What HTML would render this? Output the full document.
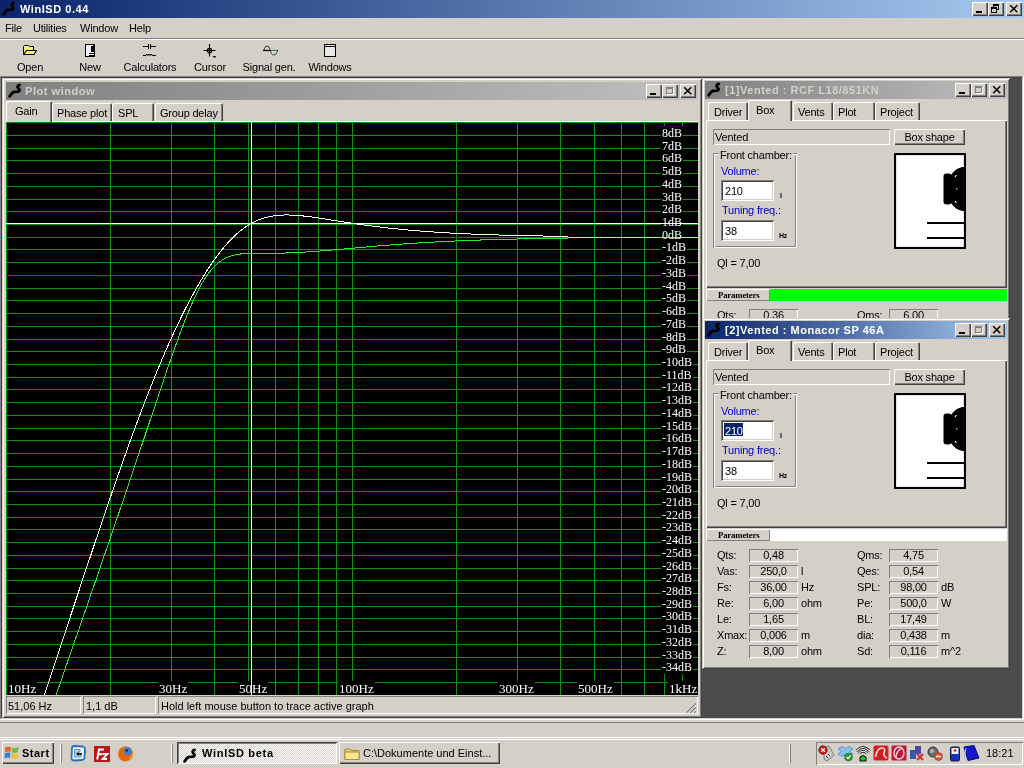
<!DOCTYPE html><html><head><meta charset="utf-8"><style>
html,body{margin:0;padding:0;}body{will-change:transform;width:1024px;height:768px;overflow:hidden;position:relative;background:#d4d0c8;font-family:"Liberation Sans",sans-serif;font-size:11px;}
body div,body svg{position:absolute;} .t{white-space:nowrap;letter-spacing:-0.2px} .lab{letter-spacing:0;font-family:"Liberation Serif",serif;font-size:12px;line-height:12px;padding:1px 1px;background:#000;color:#fff;}
</style></head><body>
<div style="left:0px;top:0px;width:1024px;height:18px;background:linear-gradient(to right,#0a246a,#a6caf0)"></div>
<svg style="left:-2px;top:-2px" width="20" height="20"><path d="M15.6 5.0 C13.2 5.2 13.0 7.6 14.8 8.8 C16.2 9.8 15.6 11.4 13.8 11.6 L10.2 11.9 C8.4 12.3 7.0 14 5.6 16.4" fill="none" stroke="#000" stroke-width="2.8" stroke-linecap="round" stroke-linejoin="round"/></svg>
<div class="t" style="left:20px;top:3.69px;font-size:11px;line-height:11px;font-weight:bold;color:#fff;font-family:'Liberation Sans', sans-serif;letter-spacing:0.55px">WinISD 0.44</div>
<div style="left:972px;top:2px;width:16px;height:14px;background:#d4d0c8;box-shadow:inset 1px 1px #fff, inset -1px -1px #404040, inset -2px -2px #808080"></div>
<div style="left:976px;top:11px;width:6px;height:2px;background:#000"></div>
<div style="left:988px;top:2px;width:16px;height:14px;background:#d4d0c8;box-shadow:inset 1px 1px #fff, inset -1px -1px #404040, inset -2px -2px #808080"></div>
<div style="left:993px;top:4px;width:6px;height:6px;box-sizing:border-box;border:1px solid #000;border-top-width:2px"></div>
<div style="left:991px;top:7px;width:6px;height:6px;box-sizing:border-box;border:1px solid #000;border-top-width:2px;background:#d4d0c8"></div>
<div style="left:1006px;top:2px;width:16px;height:14px;background:#d4d0c8;box-shadow:inset 1px 1px #fff, inset -1px -1px #404040, inset -2px -2px #808080"></div>
<svg style="left:1006px;top:2px" width="16" height="14"><path d="M4.2 3.2 L11.3 10.3 M11.3 3.2 L4.2 10.3" stroke="#000" stroke-width="1.5"/></svg>
<div class="t" style="left:5px;top:22.69px;font-size:11px;line-height:11px;font-weight:normal;color:#000;font-family:'Liberation Sans', sans-serif;">File</div>
<div class="t" style="left:33px;top:22.69px;font-size:11px;line-height:11px;font-weight:normal;color:#000;font-family:'Liberation Sans', sans-serif;">Utilities</div>
<div class="t" style="left:80px;top:22.69px;font-size:11px;line-height:11px;font-weight:normal;color:#000;font-family:'Liberation Sans', sans-serif;">Window</div>
<div class="t" style="left:129px;top:22.69px;font-size:11px;line-height:11px;font-weight:normal;color:#000;font-family:'Liberation Sans', sans-serif;">Help</div>
<div style="left:0px;top:38px;width:1024px;height:1px;background:#808080"></div>
<div style="left:0px;top:39px;width:1024px;height:1px;background:#fff"></div>
<div class="t" style="left:-10px;width:80px;text-align:center;top:61.69px;font-size:11px;line-height:11px;letter-spacing:-0.2px">Open</div>
<div class="t" style="left:50px;width:80px;text-align:center;top:61.69px;font-size:11px;line-height:11px;letter-spacing:-0.2px">New</div>
<div class="t" style="left:110px;width:80px;text-align:center;top:61.69px;font-size:11px;line-height:11px;letter-spacing:-0.2px">Calculators</div>
<div class="t" style="left:170px;width:80px;text-align:center;top:61.69px;font-size:11px;line-height:11px;letter-spacing:-0.2px">Cursor</div>
<div class="t" style="left:229px;width:80px;text-align:center;top:61.69px;font-size:11px;line-height:11px;letter-spacing:-0.2px">Signal gen.</div>
<div class="t" style="left:290px;width:80px;text-align:center;top:61.69px;font-size:11px;line-height:11px;letter-spacing:-0.2px">Windows</div>
<svg style="left:22px;top:44px" width="16" height="12"><path d="M1.5 9.5 V2.5 L2.5 1.5 H6.5 L7.5 2.5 H11.5 V6.5" fill="#f0f080" stroke="#000" stroke-width="1"/><path d="M1.5 10.5 L4.5 6.5 H14.5 L12 10.5 Z" fill="#f4f478" stroke="#000" stroke-width="1.1" stroke-linejoin="round"/></svg>
<svg style="left:85px;top:44px" width="10" height="13" shape-rendering="crispEdges"><rect x="0" y="0" width="10" height="13" fill="#000"/><rect x="1" y="1" width="7" height="1" fill="#fff"/><rect x="1" y="1" width="5" height="8" fill="#f0f0f8"/><rect x="1" y="9" width="3" height="3" fill="#f0f0f8"/><rect x="4" y="8" width="5" height="1" fill="#fff"/><rect x="4" y="10" width="5" height="1" fill="#fff"/></svg>
<svg style="left:142px;top:43px" width="16" height="15" shape-rendering="crispEdges"><rect x="1" y="3" width="13" height="1" fill="#000"/><rect x="6" y="1" width="1" height="5" fill="#000"/><rect x="8" y="1" width="1" height="5" fill="#000"/><rect x="7" y="3" width="1" height="1" fill="#d4d0c8"/><rect x="1" y="12" width="3" height="1" fill="#000"/><rect x="11" y="12" width="3" height="1" fill="#000"/><path d="M4 12.5 L5 11 L6 12.5 L7 11 L8 12.5 L9 11 L10 12.5 L11 12" fill="none" stroke="#000" stroke-width="1" shape-rendering="auto"/></svg>
<svg style="left:202px;top:43px" width="16" height="16"><path d="M1.5 7.5 H13.5 M7.5 1 V13.5" stroke="#000" stroke-width="1.1"/><circle cx="7.5" cy="7.5" r="2.2" fill="none" stroke="#000" stroke-width="1.3"/><path d="M10.5 13 h4 l-2 2 z" fill="#000"/></svg>
<svg style="left:262px;top:43px" width="18" height="14"><path d="M1 7.5 H16" stroke="#000" stroke-width="1.2"/><path d="M2 7.5 C2.5 1.5, 7.5 1.5, 8 7.5" fill="none" stroke="#203020" stroke-width="1"/><path d="M8.5 7.5 C9 13.5, 14.5 13.5, 15.5 7.5" fill="#c8dcc8" stroke="#204a30" stroke-width="1"/></svg>
<svg style="left:324px;top:44px" width="12" height="13" shape-rendering="crispEdges"><rect x="0" y="0" width="12" height="13" fill="#000"/><rect x="1" y="1" width="10" height="1" fill="#e8e8e8"/><rect x="1" y="3" width="10" height="9" fill="#e8e8e8"/></svg>
<div style="left:2px;top:78px;width:1020px;height:640px;background:#4c4c4c"></div>
<div style="left:0px;top:76px;width:1024px;height:1px;background:#808080"></div>
<div style="left:1px;top:77px;width:1022px;height:1px;background:#404040"></div>
<div style="left:0px;top:76px;width:1px;height:644px;background:#808080"></div>
<div style="left:1px;top:77px;width:1px;height:642px;background:#404040"></div>
<div style="left:0px;top:719px;width:1024px;height:1px;background:#fff"></div>
<div style="left:1px;top:718px;width:1022px;height:1px;background:#d4d0c8"></div>
<div style="left:1023px;top:76px;width:1px;height:644px;background:#fff"></div>
<div style="left:1022px;top:77px;width:1px;height:642px;background:#d4d0c8"></div>
<div style="left:0px;top:722px;width:1024px;height:1px;background:#808080"></div>
<div style="left:0px;top:737px;width:1024px;height:1px;background:#fff"></div>
<div style="left:2px;top:78px;width:700px;height:640px;background:#d4d0c8;box-shadow:inset 1px 1px #d4d0c8, inset -1px -1px #404040, inset 2px 2px #fff, inset -2px -2px #808080"></div>
<div style="left:6px;top:82px;width:692px;height:18px;background:linear-gradient(to right,#808080,#c0c0c0)"></div>
<svg style="left:4px;top:80px" width="20" height="20"><path d="M15.6 5.0 C13.2 5.2 13.0 7.6 14.8 8.8 C16.2 9.8 15.6 11.4 13.8 11.6 L10.2 11.9 C8.4 12.3 7.0 14 5.6 16.4" fill="none" stroke="#000" stroke-width="2.8" stroke-linecap="round" stroke-linejoin="round"/></svg>
<div class="t" style="left:25px;top:85.69px;font-size:11px;line-height:11px;font-weight:bold;color:#d4d0c8;font-family:'Liberation Sans', sans-serif;letter-spacing:0.55px">Plot window</div>
<div style="left:646px;top:84px;width:16px;height:14px;background:#d4d0c8;box-shadow:inset 1px 1px #fff, inset -1px -1px #404040, inset -2px -2px #808080"></div>
<div style="left:650px;top:93px;width:6px;height:2px;background:#000"></div>
<div style="left:662px;top:84px;width:16px;height:14px;background:#d4d0c8;box-shadow:inset 1px 1px #fff, inset -1px -1px #404040, inset -2px -2px #808080"></div>
<div style="left:666px;top:87px;width:7px;height:7px;box-sizing:border-box;border:1px solid #808080;border-top-width:2px;box-shadow:1px 1px #fff"></div>
<div style="left:680px;top:84px;width:16px;height:14px;background:#d4d0c8;box-shadow:inset 1px 1px #fff, inset -1px -1px #404040, inset -2px -2px #808080"></div>
<svg style="left:680px;top:84px" width="16" height="14"><path d="M4.2 3.2 L11.3 10.3 M11.3 3.2 L4.2 10.3" stroke="#000" stroke-width="1.5"/></svg>
<div style="left:6px;top:121px;width:692px;height:1px;background:#fff"></div>
<div style="left:52px;top:103px;width:60px;height:18px;background:#d4d0c8;border-top-left-radius:2px;border-top-right-radius:2px;box-shadow:inset 1px 1px #fff, inset -1px 0 #404040, inset -2px 0 #808080"></div>
<div style="left:112px;top:103px;width:42px;height:18px;background:#d4d0c8;border-top-left-radius:2px;border-top-right-radius:2px;box-shadow:inset 1px 1px #fff, inset -1px 0 #404040, inset -2px 0 #808080"></div>
<div style="left:155px;top:103px;width:68px;height:18px;background:#d4d0c8;border-top-left-radius:2px;border-top-right-radius:2px;box-shadow:inset 1px 1px #fff, inset -1px 0 #404040, inset -2px 0 #808080"></div>
<div style="left:6px;top:101px;width:46px;height:21px;background:#d4d0c8;border-top-left-radius:2px;border-top-right-radius:2px;box-shadow:inset 1px 1px #fff, inset -1px 0 #404040, inset -2px 0 #808080"></div>
<div class="t" style="left:15px;top:105.69px;font-size:11px;line-height:11px;font-weight:normal;color:#000;font-family:'Liberation Sans', sans-serif;">Gain</div>
<div class="t" style="left:57px;top:107.69px;font-size:11px;line-height:11px;font-weight:normal;color:#000;font-family:'Liberation Sans', sans-serif;">Phase plot</div>
<div class="t" style="left:118px;top:107.69px;font-size:11px;line-height:11px;font-weight:normal;color:#000;font-family:'Liberation Sans', sans-serif;">SPL</div>
<div class="t" style="left:160px;top:107.69px;font-size:11px;line-height:11px;font-weight:normal;color:#000;font-family:'Liberation Sans', sans-serif;">Group delay</div>
<svg style="left:6px;top:122px" width="692" height="573" shape-rendering="crispEdges"><rect x="0" y="0" width="692" height="573" fill="#000"/><rect x="0" y="0" width="1" height="573" fill="#0c920c"/><rect x="104" y="0" width="1" height="573" fill="#0c920c"/><rect x="165" y="0" width="1" height="573" fill="#0c920c"/><rect x="208" y="0" width="1" height="573" fill="#0c920c"/><rect x="242" y="0" width="1" height="573" fill="#0c920c"/><rect x="269" y="0" width="1" height="573" fill="#0c920c"/><rect x="292" y="0" width="1" height="573" fill="#0c920c"/><rect x="312" y="0" width="1" height="573" fill="#0c920c"/><rect x="330" y="0" width="1" height="573" fill="#0c920c"/><rect x="346" y="0" width="1" height="573" fill="#0c920c"/><rect x="450" y="0" width="1" height="573" fill="#0c920c"/><rect x="511" y="0" width="1" height="573" fill="#0c920c"/><rect x="554" y="0" width="1" height="573" fill="#0c920c"/><rect x="588" y="0" width="1" height="573" fill="#0c920c"/><rect x="615" y="0" width="1" height="573" fill="#0c920c"/><rect x="638" y="0" width="1" height="573" fill="#0c920c"/><rect x="658" y="0" width="1" height="573" fill="#0c920c"/><rect x="676" y="0" width="1" height="573" fill="#0c920c"/><rect x="0" y="0" width="692" height="1" fill="#0c920c"/><rect x="0" y="13" width="692" height="1" fill="#0c920c"/><rect x="0" y="26" width="692" height="1" fill="#0c920c"/><rect x="0" y="38" width="692" height="1" fill="#0c920c"/><rect x="0" y="51" width="692" height="1" fill="#0c920c"/><rect x="0" y="64" width="692" height="1" fill="#0c920c"/><rect x="0" y="77" width="692" height="1" fill="#0c920c"/><rect x="0" y="89" width="692" height="1" fill="#0c920c"/><rect x="0" y="102" width="692" height="1" fill="#0c920c"/><rect x="0" y="127" width="692" height="1" fill="#0c920c"/><rect x="0" y="140" width="692" height="1" fill="#0c920c"/><rect x="0" y="153" width="692" height="1" fill="#902090"/><rect x="0" y="166" width="692" height="1" fill="#0c920c"/><rect x="0" y="178" width="692" height="1" fill="#0c920c"/><rect x="0" y="191" width="692" height="1" fill="#0c920c"/><rect x="0" y="204" width="692" height="1" fill="#0c920c"/><rect x="0" y="217" width="692" height="1" fill="#0c920c"/><rect x="0" y="229" width="692" height="1" fill="#0c920c"/><rect x="0" y="242" width="692" height="1" fill="#0c920c"/><rect x="0" y="255" width="692" height="1" fill="#0c920c"/><rect x="0" y="267" width="692" height="1" fill="#0c920c"/><rect x="0" y="280" width="692" height="1" fill="#0c920c"/><rect x="0" y="293" width="692" height="1" fill="#0c920c"/><rect x="0" y="306" width="692" height="1" fill="#0c920c"/><rect x="0" y="318" width="692" height="1" fill="#0c920c"/><rect x="0" y="331" width="692" height="1" fill="#0c920c"/><rect x="0" y="344" width="692" height="1" fill="#0c920c"/><rect x="0" y="357" width="692" height="1" fill="#0c920c"/><rect x="0" y="369" width="692" height="1" fill="#0c920c"/><rect x="0" y="382" width="692" height="1" fill="#0c920c"/><rect x="0" y="395" width="692" height="1" fill="#0c920c"/><rect x="0" y="407" width="692" height="1" fill="#0c920c"/><rect x="0" y="420" width="692" height="1" fill="#0c920c"/><rect x="0" y="433" width="692" height="1" fill="#0c920c"/><rect x="0" y="446" width="692" height="1" fill="#0c920c"/><rect x="0" y="458" width="692" height="1" fill="#0c920c"/><rect x="0" y="471" width="692" height="1" fill="#0c920c"/><rect x="0" y="484" width="692" height="1" fill="#0c920c"/><rect x="0" y="496" width="692" height="1" fill="#0c920c"/><rect x="0" y="509" width="692" height="1" fill="#0c920c"/><rect x="0" y="522" width="692" height="1" fill="#0c920c"/><rect x="0" y="535" width="692" height="1" fill="#0c920c"/><rect x="0" y="547" width="692" height="1" fill="#0c920c"/><rect x="0" y="560" width="692" height="1" fill="#0c920c"/></svg>
<div style="left:6px;top:122px;width:692px;height:573px;overflow:hidden">
<div class="t lab" style="left:655px;top:3.95px;">8dB</div>
<div class="t lab" style="left:655px;top:16.95px;">7dB</div>
<div class="t lab" style="left:655px;top:28.95px;">6dB</div>
<div class="t lab" style="left:655px;top:41.95px;">5dB</div>
<div class="t lab" style="left:655px;top:54.95px;">4dB</div>
<div class="t lab" style="left:655px;top:67.95px;">3dB</div>
<div class="t lab" style="left:655px;top:79.95px;">2dB</div>
<div class="t lab" style="left:655px;top:92.95px;">1dB</div>
<div class="t lab" style="left:655px;top:105.95px;">0dB</div>
<div class="t lab" style="left:655px;top:117.95px;">-1dB</div>
<div class="t lab" style="left:655px;top:130.95px;">-2dB</div>
<div class="t lab" style="left:655px;top:143.95px;">-3dB</div>
<div class="t lab" style="left:655px;top:156.95px;">-4dB</div>
<div class="t lab" style="left:655px;top:168.95px;">-5dB</div>
<div class="t lab" style="left:655px;top:181.95px;">-6dB</div>
<div class="t lab" style="left:655px;top:194.95px;">-7dB</div>
<div class="t lab" style="left:655px;top:207.95px;">-8dB</div>
<div class="t lab" style="left:655px;top:219.95px;">-9dB</div>
<div class="t lab" style="left:655px;top:232.95px;">-10dB</div>
<div class="t lab" style="left:655px;top:245.95px;">-11dB</div>
<div class="t lab" style="left:655px;top:257.95px;">-12dB</div>
<div class="t lab" style="left:655px;top:270.95px;">-13dB</div>
<div class="t lab" style="left:655px;top:283.95px;">-14dB</div>
<div class="t lab" style="left:655px;top:296.95px;">-15dB</div>
<div class="t lab" style="left:655px;top:308.95px;">-16dB</div>
<div class="t lab" style="left:655px;top:321.95px;">-17dB</div>
<div class="t lab" style="left:655px;top:334.95px;">-18dB</div>
<div class="t lab" style="left:655px;top:347.95px;">-19dB</div>
<div class="t lab" style="left:655px;top:359.95px;">-20dB</div>
<div class="t lab" style="left:655px;top:372.95px;">-21dB</div>
<div class="t lab" style="left:655px;top:385.95px;">-22dB</div>
<div class="t lab" style="left:655px;top:397.95px;">-23dB</div>
<div class="t lab" style="left:655px;top:410.95px;">-24dB</div>
<div class="t lab" style="left:655px;top:423.95px;">-25dB</div>
<div class="t lab" style="left:655px;top:436.95px;">-26dB</div>
<div class="t lab" style="left:655px;top:448.95px;">-27dB</div>
<div class="t lab" style="left:655px;top:461.95px;">-28dB</div>
<div class="t lab" style="left:655px;top:474.95px;">-29dB</div>
<div class="t lab" style="left:655px;top:486.95px;">-30dB</div>
<div class="t lab" style="left:655px;top:499.95px;">-31dB</div>
<div class="t lab" style="left:655px;top:512.95px;">-32dB</div>
<div class="t lab" style="left:655px;top:525.95px;">-33dB</div>
<div class="t lab" style="left:655px;top:537.95px;">-34dB</div>
<div class="t lab" style="left:1px;top:559.11px;font-size:13px;line-height:13px">10Hz</div>
<div class="t lab" style="left:152px;top:559.11px;font-size:13px;line-height:13px">30Hz</div>
<div class="t lab" style="left:232px;top:559.11px;font-size:13px;line-height:13px">50Hz</div>
<div class="t lab" style="left:332px;top:559.11px;font-size:13px;line-height:13px">100Hz</div>
<div class="t lab" style="left:492px;top:559.11px;font-size:13px;line-height:13px">300Hz</div>
<div class="t lab" style="left:571px;top:559.11px;font-size:13px;line-height:13px">500Hz</div>
<div class="t lab" style="left:662px;top:559.11px;font-size:13px;line-height:13px">1kHz</div>
</div>
<div style="left:6px;top:237px;width:562px;height:1px;background:#c02828"></div>
<div style="left:568px;top:237px;width:130px;height:1px;background:#90ff90"></div>
<svg style="left:6px;top:122px;overflow:hidden" width="692" height="573"><polyline points="49.5,574.64 50.0,573.20 50.5,571.76 51.0,570.32 51.5,568.88 52.0,567.44 52.5,566.00 53.0,564.56 53.5,563.12 54.0,561.68 54.5,560.23 55.0,558.79 55.5,557.35 56.0,555.91 56.5,554.47 57.0,553.03 57.5,551.59 58.0,550.15 58.5,548.71 59.0,547.27 59.5,545.83 60.0,544.39 60.5,542.95 61.0,541.50 61.5,540.06 62.0,538.62 62.5,537.18 63.0,535.74 63.5,534.30 64.0,532.86 64.5,531.42 65.0,529.97 65.5,528.53 66.0,527.09 66.5,525.65 67.0,524.21 67.5,522.76 68.0,521.32 68.5,519.88 69.0,518.44 69.5,516.99 70.0,515.55 70.5,514.11 71.0,512.66 71.5,511.22 72.0,509.78 72.5,508.33 73.0,506.89 73.5,505.45 74.0,504.00 74.5,502.56 75.0,501.11 75.5,499.67 76.0,498.23 76.5,496.78 77.0,495.34 77.5,493.89 78.0,492.45 78.5,491.00 79.0,489.55 79.5,488.11 80.0,486.66 80.5,485.22 81.0,483.77 81.5,482.32 82.0,480.88 82.5,479.43 83.0,477.98 83.5,476.53 84.0,475.09 84.5,473.64 85.0,472.19 85.5,470.74 86.0,469.29 86.5,467.84 87.0,466.39 87.5,464.94 88.0,463.49 88.5,462.04 89.0,460.59 89.5,459.14 90.0,457.69 90.5,456.24 91.0,454.79 91.5,453.34 92.0,451.88 92.5,450.43 93.0,448.98 93.5,447.53 94.0,446.07 94.5,444.62 95.0,443.17 95.5,441.71 96.0,440.26 96.5,438.80 97.0,437.35 97.5,435.89 98.0,434.43 98.5,432.98 99.0,431.52 99.5,430.06 100.0,428.61 100.5,427.15 101.0,425.69 101.5,424.23 102.0,422.77 102.5,421.31 103.0,419.85 103.5,418.39 104.0,416.93 104.5,415.47 105.0,414.01 105.5,412.55 106.0,411.08 106.5,409.62 107.0,408.16 107.5,406.69 108.0,405.23 108.5,403.76 109.0,402.30 109.5,400.83 110.0,399.37 110.5,397.90 111.0,396.43 111.5,394.97 112.0,393.50 112.5,392.03 113.0,390.56 113.5,389.09 114.0,387.62 114.5,386.15 115.0,384.68 115.5,383.21 116.0,381.74 116.5,380.26 117.0,378.79 117.5,377.32 118.0,375.85 118.5,374.37 119.0,372.90 119.5,371.42 120.0,369.95 120.5,368.47 121.0,366.99 121.5,365.51 122.0,364.04 122.5,362.56 123.0,361.08 123.5,359.60 124.0,358.12 124.5,356.64 125.0,355.16 125.5,353.68 126.0,352.20 126.5,350.72 127.0,349.23 127.5,347.75 128.0,346.27 128.5,344.78 129.0,343.30 129.5,341.81 130.0,340.33 130.5,338.84 131.0,337.36 131.5,335.87 132.0,334.38 132.5,332.89 133.0,331.41 133.5,329.92 134.0,328.43 134.5,326.94 135.0,325.45 135.5,323.96 136.0,322.47 136.5,320.98 137.0,319.49 137.5,318.00 138.0,316.51 138.5,315.02 139.0,313.53 139.5,312.04 140.0,310.55 140.5,309.05 141.0,307.56 141.5,306.07 142.0,304.58 142.5,303.09 143.0,301.59 143.5,300.10 144.0,298.61 144.5,297.12 145.0,295.63 145.5,294.14 146.0,292.64 146.5,291.15 147.0,289.66 147.5,288.17 148.0,286.68 148.5,285.19 149.0,283.70 149.5,282.21 150.0,280.73 150.5,279.24 151.0,277.75 151.5,276.27 152.0,274.78 152.5,273.30 153.0,271.81 153.5,270.33 154.0,268.85 154.5,267.37 155.0,265.89 155.5,264.41 156.0,262.93 156.5,261.46 157.0,259.98 157.5,258.51 158.0,257.04 158.5,255.57 159.0,254.11 159.5,252.64 160.0,251.18 160.5,249.72 161.0,248.26 161.5,246.80 162.0,245.35 162.5,243.90 163.0,242.45 163.5,241.00 164.0,239.56 164.5,238.12 165.0,236.69 165.5,235.25 166.0,233.82 166.5,232.40 167.0,230.98 167.5,229.56 168.0,228.14 168.5,226.73 169.0,225.33 169.5,223.93 170.0,222.53 170.5,221.14 171.0,219.75 171.5,218.37 172.0,217.00 172.5,215.63 173.0,214.26 173.5,212.90 174.0,211.55 174.5,210.21 175.0,208.87 175.5,207.54 176.0,206.21 176.5,204.89 177.0,203.58 177.5,202.28 178.0,200.98 178.5,199.70 179.0,198.42 179.5,197.15 180.0,195.89 180.5,194.63 181.0,193.39 181.5,192.15 182.0,190.93 182.5,189.71 183.0,188.51 183.5,187.31 184.0,186.13 184.5,184.96 185.0,183.79 185.5,182.64 186.0,181.50 186.5,180.37 187.0,179.26 187.5,178.15 188.0,177.06 188.5,175.98 189.0,174.91 189.5,173.85 190.0,172.81 190.5,171.78 191.0,170.77 191.5,169.76 192.0,168.77 192.5,167.80 193.0,166.84 193.5,165.89 194.0,164.96 194.5,164.04 195.0,163.13 195.5,162.24 196.0,161.37 196.5,160.51 197.0,159.66 197.5,158.83 198.0,158.01 198.5,157.21 199.0,156.42 199.5,155.65 200.0,154.89 200.5,154.15 201.0,153.43 201.5,152.71 202.0,152.02 202.5,151.34 203.0,150.67 203.5,150.02 204.0,149.38 204.5,148.76 205.0,148.15 205.5,147.56 206.0,146.98 206.5,146.41 207.0,145.86 207.5,145.32 208.0,144.80 208.5,144.29 209.0,143.80 209.5,143.32 210.0,142.85 210.5,142.39 211.0,141.95 211.5,141.52 212.0,141.10 212.5,140.70 213.0,140.31 213.5,139.93 214.0,139.56 214.5,139.20 215.0,138.86 215.5,138.52 216.0,138.20 216.5,137.89 217.0,137.59 217.5,137.29 218.0,137.01 218.5,136.74 219.0,136.48 219.5,136.23 220.0,135.99 220.5,135.75 221.0,135.53 221.5,135.31 222.0,135.10 222.5,134.90 223.0,134.71 223.5,134.52 224.0,134.35 224.5,134.18 225.0,134.01 225.5,133.86 226.0,133.71 226.5,133.57 227.0,133.43 227.5,133.30 228.0,133.17 228.5,133.06 229.0,132.94 229.5,132.83 230.0,132.73 230.5,132.63 231.0,132.54 231.5,132.45 232.0,132.37 232.5,132.29 233.0,132.21 233.5,132.14 234.0,132.07 234.5,132.01 235.0,131.95 235.5,131.89 236.0,131.84 236.5,131.79 237.0,131.74 237.5,131.70 238.0,131.65 238.5,131.61 239.0,131.58 239.5,131.54 240.0,131.51 240.5,131.48 241.0,131.45 241.5,131.43 242.0,131.40 242.5,131.38 243.0,131.36 243.5,131.34 244.0,131.33 244.5,131.31 245.0,131.30 245.5,131.28 246.0,131.27 246.5,131.26 247.0,131.25 247.5,131.24 248.0,131.24 248.5,131.23 249.0,131.22 249.5,131.22 250.0,131.21 250.5,131.21 251.0,131.21 251.5,131.20 252.0,131.20 252.5,131.20 253.0,131.20 253.5,131.20 254.0,131.20 254.5,131.20 255.0,131.20 255.5,131.20 256.0,131.20 256.5,131.20 257.0,131.20 257.5,131.20 258.0,131.20 258.5,131.20 259.0,131.20 259.5,131.20 260.0,131.20 260.5,131.20 261.0,131.20 261.5,131.20 262.0,131.20 262.5,131.20 263.0,131.20 263.5,131.20 264.0,131.20 264.5,131.20 265.0,131.20 265.5,131.19 266.0,131.19 266.5,131.19 267.0,131.19 267.5,131.18 268.0,131.18 268.5,131.18 269.0,131.17 269.5,131.17 270.0,131.16 270.5,131.16 271.0,131.15 271.5,131.14 272.0,131.14 272.5,131.13 273.0,131.12 273.5,131.12 274.0,131.11 274.5,131.10 275.0,131.09 275.5,131.08 276.0,131.07 276.5,131.06 277.0,131.05 277.5,131.03 278.0,131.02 278.5,131.01 279.0,131.00 279.5,130.98 280.0,130.97 280.5,130.95 281.0,130.94 281.5,130.92 282.0,130.91 282.5,130.89 283.0,130.87 283.5,130.86 284.0,130.84 284.5,130.82 285.0,130.80 285.5,130.78 286.0,130.76 286.5,130.74 287.0,130.72 287.5,130.70 288.0,130.68 288.5,130.66 289.0,130.63 289.5,130.61 290.0,130.59 290.5,130.57 291.0,130.54 291.5,130.52 292.0,130.49 292.5,130.47 293.0,130.44 293.5,130.41 294.0,130.39 294.5,130.36 295.0,130.33 295.5,130.30 296.0,130.28 296.5,130.25 297.0,130.22 297.5,130.19 298.0,130.16 298.5,130.13 299.0,130.10 299.5,130.07 300.0,130.04 300.5,130.00 301.0,129.97 301.5,129.94 302.0,129.91 302.5,129.88 303.0,129.84 303.5,129.81 304.0,129.77 304.5,129.74 305.0,129.71 305.5,129.67 306.0,129.64 306.5,129.60 307.0,129.56 307.5,129.53 308.0,129.49 308.5,129.46 309.0,129.42 309.5,129.38 310.0,129.34 310.5,129.31 311.0,129.27 311.5,129.23 312.0,129.19 312.5,129.15 313.0,129.12 313.5,129.08 314.0,129.04 314.5,129.00 315.0,128.96 315.5,128.92 316.0,128.88 316.5,128.84 317.0,128.80 317.5,128.76 318.0,128.72 318.5,128.67 319.0,128.63 319.5,128.59 320.0,128.55 320.5,128.51 321.0,128.47 321.5,128.42 322.0,128.38 322.5,128.34 323.0,128.30 323.5,128.25 324.0,128.21 324.5,128.17 325.0,128.13 325.5,128.08 326.0,128.04 326.5,128.00 327.0,127.95 327.5,127.91 328.0,127.86 328.5,127.82 329.0,127.78 329.5,127.73 330.0,127.69 330.5,127.64 331.0,127.60 331.5,127.56 332.0,127.51 332.5,127.47 333.0,127.42 333.5,127.38 334.0,127.33 334.5,127.29 335.0,127.24 335.5,127.20 336.0,127.15 336.5,127.11 337.0,127.06 337.5,127.02 338.0,126.97 338.5,126.93 339.0,126.88 339.5,126.84 340.0,126.79 340.5,126.75 341.0,126.70 341.5,126.66 342.0,126.61 342.5,126.57 343.0,126.52 343.5,126.48 344.0,126.43 344.5,126.39 345.0,126.34 345.5,126.29 346.0,126.25 346.5,126.20 347.0,126.16 347.5,126.11 348.0,126.07 348.5,126.02 349.0,125.98 349.5,125.93 350.0,125.89 350.5,125.84 351.0,125.80 351.5,125.75 352.0,125.71 352.5,125.66 353.0,125.62 353.5,125.57 354.0,125.53 354.5,125.48 355.0,125.44 355.5,125.39 356.0,125.35 356.5,125.31 357.0,125.26 357.5,125.22 358.0,125.17 358.5,125.13 359.0,125.08 359.5,125.04 360.0,125.00 360.5,124.95 361.0,124.91 361.5,124.86 362.0,124.82 362.5,124.78 363.0,124.73 363.5,124.69 364.0,124.64 364.5,124.60 365.0,124.56 365.5,124.51 366.0,124.47 366.5,124.43 367.0,124.39 367.5,124.34 368.0,124.30 368.5,124.26 369.0,124.21 369.5,124.17 370.0,124.13 370.5,124.09 371.0,124.05 371.5,124.00 372.0,123.96 372.5,123.92 373.0,123.88 373.5,123.84 374.0,123.79 374.5,123.75 375.0,123.71 375.5,123.67 376.0,123.63 376.5,123.59 377.0,123.55 377.5,123.51 378.0,123.47 378.5,123.42 379.0,123.38 379.5,123.34 380.0,123.30 380.5,123.26 381.0,123.22 381.5,123.18 382.0,123.14 382.5,123.10 383.0,123.06 383.5,123.02 384.0,122.99 384.5,122.95 385.0,122.91 385.5,122.87 386.0,122.83 386.5,122.79 387.0,122.75 387.5,122.71 388.0,122.68 388.5,122.64 389.0,122.60 389.5,122.56 390.0,122.52 390.5,122.49 391.0,122.45 391.5,122.41 392.0,122.37 392.5,122.34 393.0,122.30 393.5,122.26 394.0,122.23 394.5,122.19 395.0,122.15 395.5,122.12 396.0,122.08 396.5,122.04 397.0,122.01 397.5,121.97 398.0,121.94 398.5,121.90 399.0,121.87 399.5,121.83 400.0,121.80 400.5,121.76 401.0,121.73 401.5,121.69 402.0,121.66 402.5,121.62 403.0,121.59 403.5,121.55 404.0,121.52 404.5,121.49 405.0,121.45 405.5,121.42 406.0,121.39 406.5,121.35 407.0,121.32 407.5,121.29 408.0,121.25 408.5,121.22 409.0,121.19 409.5,121.15 410.0,121.12 410.5,121.09 411.0,121.06 411.5,121.03 412.0,120.99 412.5,120.96 413.0,120.93 413.5,120.90 414.0,120.87 414.5,120.84 415.0,120.81 415.5,120.77 416.0,120.74 416.5,120.71 417.0,120.68 417.5,120.65 418.0,120.62 418.5,120.59 419.0,120.56 419.5,120.53 420.0,120.50 420.5,120.47 421.0,120.44 421.5,120.41 422.0,120.39 422.5,120.36 423.0,120.33 423.5,120.30 424.0,120.27 424.5,120.24 425.0,120.21 425.5,120.18 426.0,120.16 426.5,120.13 427.0,120.10 427.5,120.07 428.0,120.05 428.5,120.02 429.0,119.99 429.5,119.96 430.0,119.94 430.5,119.91 431.0,119.88 431.5,119.86 432.0,119.83 432.5,119.80 433.0,119.78 433.5,119.75 434.0,119.73 434.5,119.70 435.0,119.67 435.5,119.65 436.0,119.62 436.5,119.60 437.0,119.57 437.5,119.55 438.0,119.52 438.5,119.50 439.0,119.47 439.5,119.45 440.0,119.42 440.5,119.40 441.0,119.37 441.5,119.35 442.0,119.33 442.5,119.30 443.0,119.28 443.5,119.25 444.0,119.23 444.5,119.21 445.0,119.18 445.5,119.16 446.0,119.14 446.5,119.12 447.0,119.09 447.5,119.07 448.0,119.05 448.5,119.02 449.0,119.00 449.5,118.98 450.0,118.96 450.5,118.94 451.0,118.91 451.5,118.89 452.0,118.87 452.5,118.85 453.0,118.83 453.5,118.81 454.0,118.79 454.5,118.76 455.0,118.74 455.5,118.72 456.0,118.70 456.5,118.68 457.0,118.66 457.5,118.64 458.0,118.62 458.5,118.60 459.0,118.58 459.5,118.56 460.0,118.54 460.5,118.52 461.0,118.50 461.5,118.48 462.0,118.46 462.5,118.44 463.0,118.42 463.5,118.40 464.0,118.38 464.5,118.37 465.0,118.35 465.5,118.33 466.0,118.31 466.5,118.29 467.0,118.27 467.5,118.25 468.0,118.24 468.5,118.22 469.0,118.20 469.5,118.18 470.0,118.16 470.5,118.15 471.0,118.13 471.5,118.11 472.0,118.09 472.5,118.08 473.0,118.06 473.5,118.04 474.0,118.03 474.5,118.01 475.0,117.99 475.5,117.97 476.0,117.96 476.5,117.94 477.0,117.93 477.5,117.91 478.0,117.89 478.5,117.88 479.0,117.86 479.5,117.84 480.0,117.83 480.5,117.81 481.0,117.80 481.5,117.78 482.0,117.77 482.5,117.75 483.0,117.73 483.5,117.72 484.0,117.70 484.5,117.69 485.0,117.67 485.5,117.66 486.0,117.64 486.5,117.63 487.0,117.62 487.5,117.60 488.0,117.59 488.5,117.57 489.0,117.56 489.5,117.54 490.0,117.53 490.5,117.51 491.0,117.50 491.5,117.49 492.0,117.47 492.5,117.46 493.0,117.45 493.5,117.43 494.0,117.42 494.5,117.40 495.0,117.39 495.5,117.38 496.0,117.37 496.5,117.35 497.0,117.34 497.5,117.33 498.0,117.31 498.5,117.30 499.0,117.29 499.5,117.27 500.0,117.26 500.5,117.25 501.0,117.24 501.5,117.22 502.0,117.21 502.5,117.20 503.0,117.19 503.5,117.18 504.0,117.16 504.5,117.15 505.0,117.14 505.5,117.13 506.0,117.12 506.5,117.11 507.0,117.09 507.5,117.08 508.0,117.07 508.5,117.06 509.0,117.05 509.5,117.04 510.0,117.03 510.5,117.01 511.0,117.00 511.5,116.99 512.0,116.98 512.5,116.97 513.0,116.96 513.5,116.95 514.0,116.94 514.5,116.93 515.0,116.92 515.5,116.91 516.0,116.90 516.5,116.89 517.0,116.88 517.5,116.87 518.0,116.86 518.5,116.85 519.0,116.84 519.5,116.83 520.0,116.82 520.5,116.81 521.0,116.80 521.5,116.79 522.0,116.78 522.5,116.77 523.0,116.76 523.5,116.75 524.0,116.74 524.5,116.73 525.0,116.72 525.5,116.71 526.0,116.70 526.5,116.69 527.0,116.68 527.5,116.67 528.0,116.66 528.5,116.66 529.0,116.65 529.5,116.64 530.0,116.63 530.5,116.62 531.0,116.61 531.5,116.60 532.0,116.60 532.5,116.59 533.0,116.58 533.5,116.57 534.0,116.56 534.5,116.55 535.0,116.54 535.5,116.54 536.0,116.53 536.5,116.52 537.0,116.51 537.5,116.50 538.0,116.50 538.5,116.49 539.0,116.48 539.5,116.47 540.0,116.47 540.5,116.46 541.0,116.45 541.5,116.44 542.0,116.43 542.5,116.43 543.0,116.42 543.5,116.41 544.0,116.41 544.5,116.40 545.0,116.39 545.5,116.38 546.0,116.38 546.5,116.37 547.0,116.36 547.5,116.35 548.0,116.35 548.5,116.34 549.0,116.33 549.5,116.33 550.0,116.32 550.5,116.31 551.0,116.31 551.5,116.30 552.0,116.29 552.5,116.29 553.0,116.28 553.5,116.27 554.0,116.27 554.5,116.26 555.0,116.25 555.5,116.25 556.0,116.24 556.5,116.24 557.0,116.23 557.5,116.22 558.0,116.22 558.5,116.21 559.0,116.20 559.5,116.20 560.0,116.19 560.5,116.19 561.0,116.18 561.5,116.17 562.0,116.17 562.5,116.16" fill="none" stroke="#30e830" stroke-width="1" shape-rendering="crispEdges"/><polyline points="38.0,574.31 38.5,572.80 39.0,571.28 39.5,569.77 40.0,568.26 40.5,566.74 41.0,565.23 41.5,563.71 42.0,562.20 42.5,560.69 43.0,559.17 43.5,557.66 44.0,556.14 44.5,554.63 45.0,553.12 45.5,551.60 46.0,550.09 46.5,548.57 47.0,547.06 47.5,545.55 48.0,544.03 48.5,542.52 49.0,541.00 49.5,539.49 50.0,537.98 50.5,536.46 51.0,534.95 51.5,533.43 52.0,531.92 52.5,530.41 53.0,528.89 53.5,527.38 54.0,525.87 54.5,524.35 55.0,522.84 55.5,521.33 56.0,519.81 56.5,518.30 57.0,516.79 57.5,515.27 58.0,513.76 58.5,512.25 59.0,510.74 59.5,509.22 60.0,507.71 60.5,506.20 61.0,504.69 61.5,503.18 62.0,501.67 62.5,500.15 63.0,498.64 63.5,497.13 64.0,495.62 64.5,494.11 65.0,492.60 65.5,491.09 66.0,489.58 66.5,488.07 67.0,486.56 67.5,485.05 68.0,483.54 68.5,482.04 69.0,480.53 69.5,479.02 70.0,477.51 70.5,476.01 71.0,474.50 71.5,472.99 72.0,471.49 72.5,469.98 73.0,468.47 73.5,466.97 74.0,465.46 74.5,463.96 75.0,462.46 75.5,460.95 76.0,459.45 76.5,457.95 77.0,456.45 77.5,454.94 78.0,453.44 78.5,451.94 79.0,450.44 79.5,448.94 80.0,447.44 80.5,445.94 81.0,444.45 81.5,442.95 82.0,441.45 82.5,439.96 83.0,438.46 83.5,436.97 84.0,435.47 84.5,433.98 85.0,432.48 85.5,430.99 86.0,429.50 86.5,428.01 87.0,426.52 87.5,425.03 88.0,423.54 88.5,422.05 89.0,420.57 89.5,419.08 90.0,417.59 90.5,416.11 91.0,414.63 91.5,413.14 92.0,411.66 92.5,410.18 93.0,408.70 93.5,407.22 94.0,405.74 94.5,404.27 95.0,402.79 95.5,401.31 96.0,399.84 96.5,398.37 97.0,396.90 97.5,395.42 98.0,393.95 98.5,392.49 99.0,391.02 99.5,389.55 100.0,388.09 100.5,386.62 101.0,385.16 101.5,383.70 102.0,382.24 102.5,380.78 103.0,379.32 103.5,377.87 104.0,376.41 104.5,374.96 105.0,373.51 105.5,372.06 106.0,370.61 106.5,369.16 107.0,367.71 107.5,366.27 108.0,364.83 108.5,363.39 109.0,361.95 109.5,360.51 110.0,359.07 110.5,357.64 111.0,356.20 111.5,354.77 112.0,353.34 112.5,351.91 113.0,350.49 113.5,349.06 114.0,347.64 114.5,346.22 115.0,344.80 115.5,343.39 116.0,341.97 116.5,340.56 117.0,339.15 117.5,337.74 118.0,336.33 118.5,334.93 119.0,333.53 119.5,332.13 120.0,330.73 120.5,329.33 121.0,327.94 121.5,326.55 122.0,325.16 122.5,323.77 123.0,322.38 123.5,321.00 124.0,319.62 124.5,318.24 125.0,316.87 125.5,315.50 126.0,314.13 126.5,312.76 127.0,311.39 127.5,310.03 128.0,308.67 128.5,307.31 129.0,305.96 129.5,304.61 130.0,303.26 130.5,301.91 131.0,300.57 131.5,299.22 132.0,297.89 132.5,296.55 133.0,295.22 133.5,293.89 134.0,292.56 134.5,291.24 135.0,289.91 135.5,288.60 136.0,287.28 136.5,285.97 137.0,284.66 137.5,283.35 138.0,282.05 138.5,280.75 139.0,279.45 139.5,278.16 140.0,276.87 140.5,275.58 141.0,274.30 141.5,273.02 142.0,271.74 142.5,270.47 143.0,269.19 143.5,267.93 144.0,266.66 144.5,265.40 145.0,264.15 145.5,262.89 146.0,261.64 146.5,260.39 147.0,259.15 147.5,257.91 148.0,256.67 148.5,255.44 149.0,254.21 149.5,252.99 150.0,251.76 150.5,250.55 151.0,249.33 151.5,248.12 152.0,246.91 152.5,245.71 153.0,244.51 153.5,243.31 154.0,242.12 154.5,240.93 155.0,239.75 155.5,238.56 156.0,237.39 156.5,236.21 157.0,235.04 157.5,233.88 158.0,232.72 158.5,231.56 159.0,230.40 159.5,229.25 160.0,228.11 160.5,226.97 161.0,225.83 161.5,224.69 162.0,223.56 162.5,222.44 163.0,221.31 163.5,220.20 164.0,219.08 164.5,217.97 165.0,216.87 165.5,215.76 166.0,214.67 166.5,213.57 167.0,212.48 167.5,211.40 168.0,210.31 168.5,209.24 169.0,208.16 169.5,207.10 170.0,206.03 170.5,204.97 171.0,203.91 171.5,202.86 172.0,201.81 172.5,200.77 173.0,199.73 173.5,198.69 174.0,197.66 174.5,196.64 175.0,195.61 175.5,194.60 176.0,193.58 176.5,192.57 177.0,191.57 177.5,190.57 178.0,189.57 178.5,188.58 179.0,187.59 179.5,186.61 180.0,185.63 180.5,184.65 181.0,183.68 181.5,182.72 182.0,181.75 182.5,180.80 183.0,179.84 183.5,178.90 184.0,177.95 184.5,177.01 185.0,176.08 185.5,175.15 186.0,174.22 186.5,173.30 187.0,172.39 187.5,171.47 188.0,170.57 188.5,169.66 189.0,168.77 189.5,167.87 190.0,166.98 190.5,166.10 191.0,165.22 191.5,164.35 192.0,163.48 192.5,162.61 193.0,161.75 193.5,160.89 194.0,160.04 194.5,159.20 195.0,158.36 195.5,157.52 196.0,156.69 196.5,155.86 197.0,155.04 197.5,154.22 198.0,153.41 198.5,152.60 199.0,151.80 199.5,151.00 200.0,150.21 200.5,149.42 201.0,148.64 201.5,147.86 202.0,147.09 202.5,146.32 203.0,145.56 203.5,144.80 204.0,144.05 204.5,143.30 205.0,142.56 205.5,141.83 206.0,141.10 206.5,140.37 207.0,139.65 207.5,138.93 208.0,138.22 208.5,137.52 209.0,136.82 209.5,136.13 210.0,135.44 210.5,134.76 211.0,134.08 211.5,133.41 212.0,132.74 212.5,132.08 213.0,131.42 213.5,130.77 214.0,130.13 214.5,129.49 215.0,128.86 215.5,128.23 216.0,127.61 216.5,126.99 217.0,126.38 217.5,125.78 218.0,125.18 218.5,124.59 219.0,124.00 219.5,123.42 220.0,122.84 220.5,122.27 221.0,121.71 221.5,121.15 222.0,120.60 222.5,120.05 223.0,119.51 223.5,118.98 224.0,118.45 224.5,117.92 225.0,117.41 225.5,116.90 226.0,116.39 226.5,115.89 227.0,115.40 227.5,114.91 228.0,114.43 228.5,113.95 229.0,113.48 229.5,113.02 230.0,112.56 230.5,112.11 231.0,111.66 231.5,111.22 232.0,110.79 232.5,110.36 233.0,109.94 233.5,109.53 234.0,109.12 234.5,108.71 235.0,108.31 235.5,107.92 236.0,107.53 236.5,107.15 237.0,106.78 237.5,106.41 238.0,106.05 238.5,105.69 239.0,105.34 239.5,104.99 240.0,104.65 240.5,104.32 241.0,103.99 241.5,103.67 242.0,103.35 242.5,103.04 243.0,102.73 243.5,102.43 244.0,102.14 244.5,101.85 245.0,101.57 245.5,101.29 246.0,101.02 246.5,100.75 247.0,100.49 247.5,100.23 248.0,99.98 248.5,99.73 249.0,99.49 249.5,99.26 250.0,99.03 250.5,98.80 251.0,98.58 251.5,98.37 252.0,98.16 252.5,97.95 253.0,97.75 253.5,97.56 254.0,97.37 254.5,97.18 255.0,97.00 255.5,96.83 256.0,96.66 256.5,96.49 257.0,96.33 257.5,96.17 258.0,96.02 258.5,95.87 259.0,95.72 259.5,95.58 260.0,95.45 260.5,95.32 261.0,95.19 261.5,95.07 262.0,94.95 262.5,94.83 263.0,94.72 263.5,94.62 264.0,94.51 264.5,94.41 265.0,94.32 265.5,94.23 266.0,94.14 266.5,94.05 267.0,93.97 267.5,93.90 268.0,93.82 268.5,93.75 269.0,93.69 269.5,93.62 270.0,93.56 270.5,93.51 271.0,93.45 271.5,93.40 272.0,93.36 272.5,93.31 273.0,93.27 273.5,93.23 274.0,93.20 274.5,93.16 275.0,93.13 275.5,93.11 276.0,93.08 276.5,93.06 277.0,93.04 277.5,93.03 278.0,93.01 278.5,93.00 279.0,92.99 279.5,92.99 280.0,92.98 280.5,92.98 281.0,92.98 281.5,92.98 282.0,92.99 282.5,93.00 283.0,93.00 283.5,93.02 284.0,93.03 284.5,93.04 285.0,93.06 285.5,93.08 286.0,93.10 286.5,93.12 287.0,93.15 287.5,93.17 288.0,93.20 288.5,93.23 289.0,93.26 289.5,93.30 290.0,93.33 290.5,93.37 291.0,93.40 291.5,93.44 292.0,93.48 292.5,93.52 293.0,93.57 293.5,93.61 294.0,93.66 294.5,93.70 295.0,93.75 295.5,93.80 296.0,93.85 296.5,93.90 297.0,93.96 297.5,94.01 298.0,94.06 298.5,94.12 299.0,94.18 299.5,94.23 300.0,94.29 300.5,94.35 301.0,94.41 301.5,94.47 302.0,94.54 302.5,94.60 303.0,94.66 303.5,94.73 304.0,94.79 304.5,94.86 305.0,94.93 305.5,94.99 306.0,95.06 306.5,95.13 307.0,95.20 307.5,95.27 308.0,95.34 308.5,95.41 309.0,95.48 309.5,95.55 310.0,95.63 310.5,95.70 311.0,95.77 311.5,95.85 312.0,95.92 312.5,95.99 313.0,96.07 313.5,96.14 314.0,96.22 314.5,96.30 315.0,96.37 315.5,96.45 316.0,96.53 316.5,96.60 317.0,96.68 317.5,96.76 318.0,96.84 318.5,96.91 319.0,96.99 319.5,97.07 320.0,97.15 320.5,97.23 321.0,97.31 321.5,97.39 322.0,97.47 322.5,97.55 323.0,97.62 323.5,97.70 324.0,97.78 324.5,97.86 325.0,97.94 325.5,98.02 326.0,98.10 326.5,98.18 327.0,98.26 327.5,98.34 328.0,98.42 328.5,98.50 329.0,98.58 329.5,98.66 330.0,98.74 330.5,98.82 331.0,98.90 331.5,98.98 332.0,99.06 332.5,99.14 333.0,99.22 333.5,99.30 334.0,99.38 334.5,99.46 335.0,99.54 335.5,99.62 336.0,99.69 336.5,99.77 337.0,99.85 337.5,99.93 338.0,100.01 338.5,100.09 339.0,100.16 339.5,100.24 340.0,100.32 340.5,100.40 341.0,100.48 341.5,100.55 342.0,100.63 342.5,100.71 343.0,100.78 343.5,100.86 344.0,100.94 344.5,101.01 345.0,101.09 345.5,101.16 346.0,101.24 346.5,101.31 347.0,101.39 347.5,101.46 348.0,101.54 348.5,101.61 349.0,101.69 349.5,101.76 350.0,101.83 350.5,101.91 351.0,101.98 351.5,102.05 352.0,102.13 352.5,102.20 353.0,102.27 353.5,102.34 354.0,102.42 354.5,102.49 355.0,102.56 355.5,102.63 356.0,102.70 356.5,102.77 357.0,102.84 357.5,102.91 358.0,102.98 358.5,103.05 359.0,103.12 359.5,103.19 360.0,103.26 360.5,103.32 361.0,103.39 361.5,103.46 362.0,103.53 362.5,103.59 363.0,103.66 363.5,103.73 364.0,103.79 364.5,103.86 365.0,103.93 365.5,103.99 366.0,104.06 366.5,104.12 367.0,104.19 367.5,104.25 368.0,104.31 368.5,104.38 369.0,104.44 369.5,104.50 370.0,104.57 370.5,104.63 371.0,104.69 371.5,104.75 372.0,104.82 372.5,104.88 373.0,104.94 373.5,105.00 374.0,105.06 374.5,105.12 375.0,105.18 375.5,105.24 376.0,105.30 376.5,105.36 377.0,105.42 377.5,105.48 378.0,105.54 378.5,105.59 379.0,105.65 379.5,105.71 380.0,105.77 380.5,105.82 381.0,105.88 381.5,105.94 382.0,105.99 382.5,106.05 383.0,106.10 383.5,106.16 384.0,106.21 384.5,106.27 385.0,106.32 385.5,106.38 386.0,106.43 386.5,106.48 387.0,106.54 387.5,106.59 388.0,106.64 388.5,106.69 389.0,106.75 389.5,106.80 390.0,106.85 390.5,106.90 391.0,106.95 391.5,107.00 392.0,107.05 392.5,107.10 393.0,107.15 393.5,107.20 394.0,107.25 394.5,107.30 395.0,107.35 395.5,107.40 396.0,107.45 396.5,107.50 397.0,107.54 397.5,107.59 398.0,107.64 398.5,107.69 399.0,107.73 399.5,107.78 400.0,107.83 400.5,107.87 401.0,107.92 401.5,107.96 402.0,108.01 402.5,108.05 403.0,108.10 403.5,108.14 404.0,108.19 404.5,108.23 405.0,108.27 405.5,108.32 406.0,108.36 406.5,108.40 407.0,108.45 407.5,108.49 408.0,108.53 408.5,108.57 409.0,108.62 409.5,108.66 410.0,108.70 410.5,108.74 411.0,108.78 411.5,108.82 412.0,108.86 412.5,108.90 413.0,108.94 413.5,108.98 414.0,109.02 414.5,109.06 415.0,109.10 415.5,109.14 416.0,109.18 416.5,109.21 417.0,109.25 417.5,109.29 418.0,109.33 418.5,109.36 419.0,109.40 419.5,109.44 420.0,109.48 420.5,109.51 421.0,109.55 421.5,109.58 422.0,109.62 422.5,109.66 423.0,109.69 423.5,109.73 424.0,109.76 424.5,109.80 425.0,109.83 425.5,109.87 426.0,109.90 426.5,109.93 427.0,109.97 427.5,110.00 428.0,110.04 428.5,110.07 429.0,110.10 429.5,110.13 430.0,110.17 430.5,110.20 431.0,110.23 431.5,110.26 432.0,110.30 432.5,110.33 433.0,110.36 433.5,110.39 434.0,110.42 434.5,110.45 435.0,110.48 435.5,110.51 436.0,110.54 436.5,110.57 437.0,110.60 437.5,110.63 438.0,110.66 438.5,110.69 439.0,110.72 439.5,110.75 440.0,110.78 440.5,110.81 441.0,110.84 441.5,110.87 442.0,110.89 442.5,110.92 443.0,110.95 443.5,110.98 444.0,111.01 444.5,111.03 445.0,111.06 445.5,111.09 446.0,111.11 446.5,111.14 447.0,111.17 447.5,111.19 448.0,111.22 448.5,111.25 449.0,111.27 449.5,111.30 450.0,111.32 450.5,111.35 451.0,111.37 451.5,111.40 452.0,111.42 452.5,111.45 453.0,111.47 453.5,111.50 454.0,111.52 454.5,111.55 455.0,111.57 455.5,111.59 456.0,111.62 456.5,111.64 457.0,111.66 457.5,111.69 458.0,111.71 458.5,111.73 459.0,111.76 459.5,111.78 460.0,111.80 460.5,111.82 461.0,111.85 461.5,111.87 462.0,111.89 462.5,111.91 463.0,111.93 463.5,111.96 464.0,111.98 464.5,112.00 465.0,112.02 465.5,112.04 466.0,112.06 466.5,112.08 467.0,112.10 467.5,112.12 468.0,112.14 468.5,112.16 469.0,112.18 469.5,112.20 470.0,112.22 470.5,112.24 471.0,112.26 471.5,112.28 472.0,112.30 472.5,112.32 473.0,112.34 473.5,112.36 474.0,112.38 474.5,112.40 475.0,112.42 475.5,112.43 476.0,112.45 476.5,112.47 477.0,112.49 477.5,112.51 478.0,112.52 478.5,112.54 479.0,112.56 479.5,112.58 480.0,112.60 480.5,112.61 481.0,112.63 481.5,112.65 482.0,112.66 482.5,112.68 483.0,112.70 483.5,112.71 484.0,112.73 484.5,112.75 485.0,112.76 485.5,112.78 486.0,112.80 486.5,112.81 487.0,112.83 487.5,112.85 488.0,112.86 488.5,112.88 489.0,112.89 489.5,112.91 490.0,112.92 490.5,112.94 491.0,112.95 491.5,112.97 492.0,112.98 492.5,113.00 493.0,113.01 493.5,113.03 494.0,113.04 494.5,113.06 495.0,113.07 495.5,113.09 496.0,113.10 496.5,113.11 497.0,113.13 497.5,113.14 498.0,113.16 498.5,113.17 499.0,113.18 499.5,113.20 500.0,113.21 500.5,113.22 501.0,113.24 501.5,113.25 502.0,113.26 502.5,113.28 503.0,113.29 503.5,113.30 504.0,113.32 504.5,113.33 505.0,113.34 505.5,113.35 506.0,113.37 506.5,113.38 507.0,113.39 507.5,113.40 508.0,113.42 508.5,113.43 509.0,113.44 509.5,113.45 510.0,113.46 510.5,113.48 511.0,113.49 511.5,113.50 512.0,113.51 512.5,113.52 513.0,113.53 513.5,113.55 514.0,113.56 514.5,113.57 515.0,113.58 515.5,113.59 516.0,113.60 516.5,113.61 517.0,113.62 517.5,113.63 518.0,113.64 518.5,113.65 519.0,113.67 519.5,113.68 520.0,113.69 520.5,113.70 521.0,113.71 521.5,113.72 522.0,113.73 522.5,113.74 523.0,113.75 523.5,113.76 524.0,113.77 524.5,113.78 525.0,113.79 525.5,113.80 526.0,113.81 526.5,113.82 527.0,113.83 527.5,113.84 528.0,113.84 528.5,113.85 529.0,113.86 529.5,113.87 530.0,113.88 530.5,113.89 531.0,113.90 531.5,113.91 532.0,113.92 532.5,113.93 533.0,113.94 533.5,113.94 534.0,113.95 534.5,113.96 535.0,113.97 535.5,113.98 536.0,113.99 536.5,114.00 537.0,114.00 537.5,114.01 538.0,114.02 538.5,114.03 539.0,114.04 539.5,114.05 540.0,114.05 540.5,114.06 541.0,114.07 541.5,114.08 542.0,114.08 542.5,114.09 543.0,114.10 543.5,114.11 544.0,114.12 544.5,114.12 545.0,114.13 545.5,114.14 546.0,114.15 546.5,114.15 547.0,114.16 547.5,114.17 548.0,114.17 548.5,114.18 549.0,114.19 549.5,114.20 550.0,114.20 550.5,114.21 551.0,114.22 551.5,114.22 552.0,114.23 552.5,114.24 553.0,114.24 553.5,114.25 554.0,114.26 554.5,114.26 555.0,114.27 555.5,114.28 556.0,114.28 556.5,114.29 557.0,114.30 557.5,114.30 558.0,114.31 558.5,114.32 559.0,114.32 559.5,114.33 560.0,114.34 560.5,114.34 561.0,114.35 561.5,114.35 562.0,114.36 562.5,114.37" fill="none" stroke="#ffffff" stroke-width="1" shape-rendering="crispEdges"/></svg>
<div style="left:6px;top:223px;width:692px;height:1px;background:#fff"></div>
<div style="left:251px;top:122px;width:1px;height:573px;background:#fff"></div>
<div style="left:6px;top:696px;width:75px;height:18px;background:#d4d0c8;box-shadow:inset 1px 1px #808080, inset -1px -1px #fff"></div>
<div style="left:83px;top:696px;width:73px;height:18px;background:#d4d0c8;box-shadow:inset 1px 1px #808080, inset -1px -1px #fff"></div>
<div style="left:158px;top:696px;width:540px;height:18px;background:#d4d0c8;box-shadow:inset 1px 1px #808080, inset -1px -1px #fff"></div>
<div class="t" style="left:8px;top:700.69px;font-size:11px;line-height:11px;font-weight:normal;color:#000;font-family:'Liberation Sans', sans-serif;letter-spacing:0">51,06 Hz</div>
<div class="t" style="left:86px;top:700.69px;font-size:11px;line-height:11px;font-weight:normal;color:#000;font-family:'Liberation Sans', sans-serif;letter-spacing:0">1,1 dB</div>
<div class="t" style="left:161px;top:700.69px;font-size:11px;line-height:11px;font-weight:normal;color:#000;font-family:'Liberation Sans', sans-serif;letter-spacing:0">Hold left mouse button to trace active graph</div>
<svg style="left:684px;top:701px" width="13" height="13"><path d="M12 1 L1 12 M12 5 L5 12 M12 9 L9 12" stroke="#fff" stroke-width="1"/><path d="M12 2 L2 12 M12 6 L6 12 M12 10 L10 12" stroke="#808080" stroke-width="1.2"/></svg>
<div style="left:702px;top:78px;width:308px;height:240px;overflow:hidden;">
<div style="left:0px;top:0px;width:308px;height:351px;background:#d4d0c8;box-shadow:inset 1px 1px #d4d0c8, inset -1px -1px #404040, inset 2px 2px #fff, inset -2px -2px #808080"></div>
<div style="left:3px;top:3px;width:303px;height:18px;background:linear-gradient(to right,#808080,#c0c0c0)"></div>
<svg style="left:1px;top:1px" width="20" height="20"><path d="M15.6 5.0 C13.2 5.2 13.0 7.6 14.8 8.8 C16.2 9.8 15.6 11.4 13.8 11.6 L10.2 11.9 C8.4 12.3 7.0 14 5.6 16.4" fill="none" stroke="#000" stroke-width="2.8" stroke-linecap="round" stroke-linejoin="round"/></svg>
<div class="t" style="left:23px;top:6.69px;font-size:11px;line-height:11px;font-weight:bold;color:#d4d0c8;font-family:'Liberation Sans', sans-serif;letter-spacing:0.52px">[1]Vented : RCF L18/851KN</div>
<div style="left:253px;top:5px;width:16px;height:14px;background:#d4d0c8;box-shadow:inset 1px 1px #fff, inset -1px -1px #404040, inset -2px -2px #808080"></div>
<div style="left:257px;top:14px;width:6px;height:2px;background:#000"></div>
<div style="left:269px;top:5px;width:16px;height:14px;background:#d4d0c8;box-shadow:inset 1px 1px #fff, inset -1px -1px #404040, inset -2px -2px #808080"></div>
<div style="left:273px;top:8px;width:7px;height:7px;box-sizing:border-box;border:1px solid #808080;border-top-width:2px;box-shadow:1px 1px #fff"></div>
<div style="left:287px;top:5px;width:16px;height:14px;background:#d4d0c8;box-shadow:inset 1px 1px #fff, inset -1px -1px #404040, inset -2px -2px #808080"></div>
<svg style="left:287px;top:5px" width="16" height="14"><path d="M4.2 3.2 L11.3 10.3 M11.3 3.2 L4.2 10.3" stroke="#000" stroke-width="1.5"/></svg>
<div style="left:4px;top:42px;width:301px;height:168px;background:#d4d0c8;box-shadow:inset 1px 1px #fff, inset -1px -1px #404040, inset -2px -2px #808080"></div>
<div style="left:6px;top:24px;width:40px;height:18px;background:#d4d0c8;border-top-left-radius:2px;border-top-right-radius:2px;box-shadow:inset 1px 1px #fff, inset -1px 0 #404040, inset -2px 0 #808080"></div>
<div class="t" style="left:12px;top:28.69px;font-size:11px;line-height:11px;font-weight:normal;color:#000;font-family:'Liberation Sans', sans-serif;">Driver</div>
<div style="left:91px;top:24px;width:40px;height:18px;background:#d4d0c8;border-top-left-radius:2px;border-top-right-radius:2px;box-shadow:inset 1px 1px #fff, inset -1px 0 #404040, inset -2px 0 #808080"></div>
<div class="t" style="left:96px;top:28.69px;font-size:11px;line-height:11px;font-weight:normal;color:#000;font-family:'Liberation Sans', sans-serif;">Vents</div>
<div style="left:131px;top:24px;width:42px;height:18px;background:#d4d0c8;border-top-left-radius:2px;border-top-right-radius:2px;box-shadow:inset 1px 1px #fff, inset -1px 0 #404040, inset -2px 0 #808080"></div>
<div class="t" style="left:136px;top:28.69px;font-size:11px;line-height:11px;font-weight:normal;color:#000;font-family:'Liberation Sans', sans-serif;">Plot</div>
<div style="left:173px;top:24px;width:45px;height:18px;background:#d4d0c8;border-top-left-radius:2px;border-top-right-radius:2px;box-shadow:inset 1px 1px #fff, inset -1px 0 #404040, inset -2px 0 #808080"></div>
<div class="t" style="left:178px;top:28.69px;font-size:11px;line-height:11px;font-weight:normal;color:#000;font-family:'Liberation Sans', sans-serif;">Project</div>
<div style="left:46px;top:22px;width:44px;height:21px;background:#d4d0c8;border-top-left-radius:2px;border-top-right-radius:2px;box-shadow:inset 1px 1px #fff, inset -1px 0 #404040, inset -2px 0 #808080"></div>
<div style="left:47px;top:42px;width:41px;height:2px;background:#d4d0c8"></div>
<div class="t" style="left:54px;top:26.69px;font-size:11px;line-height:11px;font-weight:normal;color:#000;font-family:'Liberation Sans', sans-serif;">Box</div>
<div style="left:11px;top:51px;width:177px;height:16px;background:#d4d0c8;box-shadow:inset 1px 1px #808080, inset -1px -1px #fff"></div>
<div class="t" style="left:13px;top:53.69px;font-size:11px;line-height:11px;font-weight:normal;color:#000;font-family:'Liberation Sans', sans-serif;">Vented</div>
<div style="left:192px;top:51px;width:71px;height:16px;background:#d4d0c8;box-shadow:inset 1px 1px #fff, inset -1px -1px #404040, inset -2px -2px #808080"></div>
<div class="t" style="left:192px;width:71px;text-align:center;top:53.69px;font-size:11px;line-height:11px">Box shape</div>
<div style="left:11px;top:75px;width:84px;height:95px;box-shadow:inset 1px 1px #808080, inset -1px -1px #fff, inset 2px 2px #fff, inset -2px -2px #808080"></div>
<div class="t" style="left:17px;top:71.69px;font-size:11px;line-height:11px;font-weight:normal;color:#000;font-family:'Liberation Sans', sans-serif;background:#d4d0c8;padding:0 1px">Front chamber:</div>
<div class="t" style="left:19px;top:87.69px;font-size:11px;line-height:11px;font-weight:normal;color:#0000c0;font-family:'Liberation Sans', sans-serif;">Volume:</div>
<div style="left:19px;top:102px;width:53px;height:21px;background:#fff;box-shadow:inset 1px 1px #808080, inset -1px -1px #fff, inset 2px 2px #404040, inset -2px -2px #d4d0c8"></div>
<div class="t" style="left:23px;top:107.69px;font-size:11px;line-height:11px;font-weight:normal;color:#000;font-family:'Liberation Sans', sans-serif;">210</div>
<div class="t" style="left:78px;top:114.07px;font-size:7px;line-height:7px;font-weight:bold;color:#000;font-family:'Liberation Sans', sans-serif;">l</div>
<div class="t" style="left:20px;top:126.69px;font-size:11px;line-height:11px;font-weight:normal;color:#0000c0;font-family:'Liberation Sans', sans-serif;">Tuning freq.:</div>
<div style="left:19px;top:142px;width:53px;height:21px;background:#fff;box-shadow:inset 1px 1px #808080, inset -1px -1px #fff, inset 2px 2px #404040, inset -2px -2px #d4d0c8"></div>
<div class="t" style="left:23px;top:147.69px;font-size:11px;line-height:11px;font-weight:normal;color:#000;font-family:'Liberation Sans', sans-serif;">38</div>
<div class="t" style="left:77px;top:154.07px;font-size:7px;line-height:7px;font-weight:bold;color:#000;font-family:'Liberation Sans', sans-serif;">Hz</div>
<svg style="left:192px;top:75px" width="72" height="96"><rect x="1" y="1" width="70" height="94" fill="#fff" stroke="#000" stroke-width="2.2"/><rect x="49.5" y="20.5" width="8" height="31" rx="3" fill="#000"/><path d="M57 22 C61 16, 66 14, 70 14 L70 58 C66 58, 61 56, 57 50 Z" fill="#000"/><path d="M61 24 l1.5 -2 M62 36 l1.5 0 M61 48 l1.5 2" stroke="#fff" stroke-width="1.2"/><rect x="33" y="69" width="37" height="2" fill="#000"/><rect x="33" y="84" width="37" height="2" fill="#000"/></svg>
<div class="t" style="left:15px;top:179.69px;font-size:11px;line-height:11px;font-weight:normal;color:#000;font-family:'Liberation Sans', sans-serif;">Ql = 7,00</div>
<div style="left:4px;top:211px;width:64px;height:12px;background:#d4d0c8;box-shadow:inset 1px 1px #fff, inset -1px -1px #808080"></div>
<div class="t" style="left:16px;top:213.13px;font-size:8.8px;line-height:8.8px;font-weight:bold;color:#000;font-family:'Liberation Serif', serif;">Parameters</div>
<div style="left:68px;top:211px;width:237px;height:12px;background:#00ff00"></div>
<div class="t" style="left:15px;top:231.69px;font-size:11px;line-height:11px;font-weight:normal;color:#000;font-family:'Liberation Sans', sans-serif;">Qts:</div>
<div style="left:47px;top:231px;width:49px;height:13px;background:#d4d0c8;box-shadow:inset 1px 1px #808080, inset -1px -1px #fff"></div>
<div class="t" style="left:47px;width:49px;text-align:center;top:231.69px;font-size:11px;line-height:11px">0,36</div>
<div class="t" style="left:155px;top:231.69px;font-size:11px;line-height:11px;font-weight:normal;color:#000;font-family:'Liberation Sans', sans-serif;">Qms:</div>
<div style="left:187px;top:231px;width:49px;height:13px;background:#d4d0c8;box-shadow:inset 1px 1px #808080, inset -1px -1px #fff"></div>
<div class="t" style="left:187px;width:49px;text-align:center;top:231.69px;font-size:11px;line-height:11px">6,00</div>
<div class="t" style="left:15px;top:247.69px;font-size:11px;line-height:11px;font-weight:normal;color:#000;font-family:'Liberation Sans', sans-serif;">Vas:</div>
<div style="left:47px;top:247px;width:49px;height:13px;background:#d4d0c8;box-shadow:inset 1px 1px #808080, inset -1px -1px #fff"></div>
<div class="t" style="left:47px;width:49px;text-align:center;top:247.69px;font-size:11px;line-height:11px">?</div>
<div class="t" style="left:99px;top:247.69px;font-size:11px;line-height:11px;font-weight:normal;color:#000;font-family:'Liberation Sans', sans-serif;">l</div>
<div class="t" style="left:155px;top:247.69px;font-size:11px;line-height:11px;font-weight:normal;color:#000;font-family:'Liberation Sans', sans-serif;">Qes:</div>
<div style="left:187px;top:247px;width:49px;height:13px;background:#d4d0c8;box-shadow:inset 1px 1px #808080, inset -1px -1px #fff"></div>
<div class="t" style="left:187px;width:49px;text-align:center;top:247.69px;font-size:11px;line-height:11px">?</div>
<div class="t" style="left:15px;top:263.69px;font-size:11px;line-height:11px;font-weight:normal;color:#000;font-family:'Liberation Sans', sans-serif;">Fs:</div>
<div style="left:47px;top:263px;width:49px;height:13px;background:#d4d0c8;box-shadow:inset 1px 1px #808080, inset -1px -1px #fff"></div>
<div class="t" style="left:47px;width:49px;text-align:center;top:263.69px;font-size:11px;line-height:11px">?</div>
<div class="t" style="left:99px;top:263.69px;font-size:11px;line-height:11px;font-weight:normal;color:#000;font-family:'Liberation Sans', sans-serif;">Hz</div>
<div class="t" style="left:155px;top:263.69px;font-size:11px;line-height:11px;font-weight:normal;color:#000;font-family:'Liberation Sans', sans-serif;">SPL:</div>
<div style="left:187px;top:263px;width:49px;height:13px;background:#d4d0c8;box-shadow:inset 1px 1px #808080, inset -1px -1px #fff"></div>
<div class="t" style="left:187px;width:49px;text-align:center;top:263.69px;font-size:11px;line-height:11px">?</div>
<div class="t" style="left:239px;top:263.69px;font-size:11px;line-height:11px;font-weight:normal;color:#000;font-family:'Liberation Sans', sans-serif;">dB</div>
<div class="t" style="left:15px;top:279.69px;font-size:11px;line-height:11px;font-weight:normal;color:#000;font-family:'Liberation Sans', sans-serif;">Re:</div>
<div style="left:47px;top:279px;width:49px;height:13px;background:#d4d0c8;box-shadow:inset 1px 1px #808080, inset -1px -1px #fff"></div>
<div class="t" style="left:47px;width:49px;text-align:center;top:279.69px;font-size:11px;line-height:11px">?</div>
<div class="t" style="left:99px;top:279.69px;font-size:11px;line-height:11px;font-weight:normal;color:#000;font-family:'Liberation Sans', sans-serif;">ohm</div>
<div class="t" style="left:155px;top:279.69px;font-size:11px;line-height:11px;font-weight:normal;color:#000;font-family:'Liberation Sans', sans-serif;">Pe:</div>
<div style="left:187px;top:279px;width:49px;height:13px;background:#d4d0c8;box-shadow:inset 1px 1px #808080, inset -1px -1px #fff"></div>
<div class="t" style="left:187px;width:49px;text-align:center;top:279.69px;font-size:11px;line-height:11px">?</div>
<div class="t" style="left:239px;top:279.69px;font-size:11px;line-height:11px;font-weight:normal;color:#000;font-family:'Liberation Sans', sans-serif;">W</div>
<div class="t" style="left:15px;top:295.69px;font-size:11px;line-height:11px;font-weight:normal;color:#000;font-family:'Liberation Sans', sans-serif;">Le:</div>
<div style="left:47px;top:295px;width:49px;height:13px;background:#d4d0c8;box-shadow:inset 1px 1px #808080, inset -1px -1px #fff"></div>
<div class="t" style="left:47px;width:49px;text-align:center;top:295.69px;font-size:11px;line-height:11px">?</div>
<div class="t" style="left:155px;top:295.69px;font-size:11px;line-height:11px;font-weight:normal;color:#000;font-family:'Liberation Sans', sans-serif;">BL:</div>
<div style="left:187px;top:295px;width:49px;height:13px;background:#d4d0c8;box-shadow:inset 1px 1px #808080, inset -1px -1px #fff"></div>
<div class="t" style="left:187px;width:49px;text-align:center;top:295.69px;font-size:11px;line-height:11px">?</div>
<div class="t" style="left:15px;top:311.69px;font-size:11px;line-height:11px;font-weight:normal;color:#000;font-family:'Liberation Sans', sans-serif;">Xmax:</div>
<div style="left:47px;top:311px;width:49px;height:13px;background:#d4d0c8;box-shadow:inset 1px 1px #808080, inset -1px -1px #fff"></div>
<div class="t" style="left:47px;width:49px;text-align:center;top:311.69px;font-size:11px;line-height:11px">?</div>
<div class="t" style="left:99px;top:311.69px;font-size:11px;line-height:11px;font-weight:normal;color:#000;font-family:'Liberation Sans', sans-serif;">m</div>
<div class="t" style="left:155px;top:311.69px;font-size:11px;line-height:11px;font-weight:normal;color:#000;font-family:'Liberation Sans', sans-serif;">dia:</div>
<div style="left:187px;top:311px;width:49px;height:13px;background:#d4d0c8;box-shadow:inset 1px 1px #808080, inset -1px -1px #fff"></div>
<div class="t" style="left:187px;width:49px;text-align:center;top:311.69px;font-size:11px;line-height:11px">?</div>
<div class="t" style="left:239px;top:311.69px;font-size:11px;line-height:11px;font-weight:normal;color:#000;font-family:'Liberation Sans', sans-serif;">m</div>
<div class="t" style="left:15px;top:327.69px;font-size:11px;line-height:11px;font-weight:normal;color:#000;font-family:'Liberation Sans', sans-serif;">Z:</div>
<div style="left:47px;top:327px;width:49px;height:13px;background:#d4d0c8;box-shadow:inset 1px 1px #808080, inset -1px -1px #fff"></div>
<div class="t" style="left:47px;width:49px;text-align:center;top:327.69px;font-size:11px;line-height:11px">?</div>
<div class="t" style="left:99px;top:327.69px;font-size:11px;line-height:11px;font-weight:normal;color:#000;font-family:'Liberation Sans', sans-serif;">ohm</div>
<div class="t" style="left:155px;top:327.69px;font-size:11px;line-height:11px;font-weight:normal;color:#000;font-family:'Liberation Sans', sans-serif;">Sd:</div>
<div style="left:187px;top:327px;width:49px;height:13px;background:#d4d0c8;box-shadow:inset 1px 1px #808080, inset -1px -1px #fff"></div>
<div class="t" style="left:187px;width:49px;text-align:center;top:327.69px;font-size:11px;line-height:11px">?</div>
<div class="t" style="left:239px;top:327.69px;font-size:11px;line-height:11px;font-weight:normal;color:#000;font-family:'Liberation Sans', sans-serif;">m^2</div>
</div>
<div style="left:702px;top:318px;width:308px;height:351px;overflow:hidden;">
<div style="left:0px;top:0px;width:308px;height:351px;background:#d4d0c8;box-shadow:inset 1px 1px #d4d0c8, inset -1px -1px #404040, inset 2px 2px #fff, inset -2px -2px #808080"></div>
<div style="left:3px;top:3px;width:303px;height:18px;background:linear-gradient(to right,#0a246a,#a6caf0)"></div>
<svg style="left:1px;top:1px" width="20" height="20"><path d="M15.6 5.0 C13.2 5.2 13.0 7.6 14.8 8.8 C16.2 9.8 15.6 11.4 13.8 11.6 L10.2 11.9 C8.4 12.3 7.0 14 5.6 16.4" fill="none" stroke="#000" stroke-width="2.8" stroke-linecap="round" stroke-linejoin="round"/></svg>
<div class="t" style="left:23px;top:6.69px;font-size:11px;line-height:11px;font-weight:bold;color:#fff;font-family:'Liberation Sans', sans-serif;letter-spacing:0.52px">[2]Vented : Monacor SP 46A</div>
<div style="left:253px;top:5px;width:16px;height:14px;background:#d4d0c8;box-shadow:inset 1px 1px #fff, inset -1px -1px #404040, inset -2px -2px #808080"></div>
<div style="left:257px;top:14px;width:6px;height:2px;background:#000"></div>
<div style="left:269px;top:5px;width:16px;height:14px;background:#d4d0c8;box-shadow:inset 1px 1px #fff, inset -1px -1px #404040, inset -2px -2px #808080"></div>
<div style="left:273px;top:8px;width:7px;height:7px;box-sizing:border-box;border:1px solid #808080;border-top-width:2px;box-shadow:1px 1px #fff"></div>
<div style="left:287px;top:5px;width:16px;height:14px;background:#d4d0c8;box-shadow:inset 1px 1px #fff, inset -1px -1px #404040, inset -2px -2px #808080"></div>
<svg style="left:287px;top:5px" width="16" height="14"><path d="M4.2 3.2 L11.3 10.3 M11.3 3.2 L4.2 10.3" stroke="#000" stroke-width="1.5"/></svg>
<div style="left:4px;top:42px;width:301px;height:168px;background:#d4d0c8;box-shadow:inset 1px 1px #fff, inset -1px -1px #404040, inset -2px -2px #808080"></div>
<div style="left:6px;top:24px;width:40px;height:18px;background:#d4d0c8;border-top-left-radius:2px;border-top-right-radius:2px;box-shadow:inset 1px 1px #fff, inset -1px 0 #404040, inset -2px 0 #808080"></div>
<div class="t" style="left:12px;top:28.69px;font-size:11px;line-height:11px;font-weight:normal;color:#000;font-family:'Liberation Sans', sans-serif;">Driver</div>
<div style="left:91px;top:24px;width:40px;height:18px;background:#d4d0c8;border-top-left-radius:2px;border-top-right-radius:2px;box-shadow:inset 1px 1px #fff, inset -1px 0 #404040, inset -2px 0 #808080"></div>
<div class="t" style="left:96px;top:28.69px;font-size:11px;line-height:11px;font-weight:normal;color:#000;font-family:'Liberation Sans', sans-serif;">Vents</div>
<div style="left:131px;top:24px;width:42px;height:18px;background:#d4d0c8;border-top-left-radius:2px;border-top-right-radius:2px;box-shadow:inset 1px 1px #fff, inset -1px 0 #404040, inset -2px 0 #808080"></div>
<div class="t" style="left:136px;top:28.69px;font-size:11px;line-height:11px;font-weight:normal;color:#000;font-family:'Liberation Sans', sans-serif;">Plot</div>
<div style="left:173px;top:24px;width:45px;height:18px;background:#d4d0c8;border-top-left-radius:2px;border-top-right-radius:2px;box-shadow:inset 1px 1px #fff, inset -1px 0 #404040, inset -2px 0 #808080"></div>
<div class="t" style="left:178px;top:28.69px;font-size:11px;line-height:11px;font-weight:normal;color:#000;font-family:'Liberation Sans', sans-serif;">Project</div>
<div style="left:46px;top:22px;width:44px;height:21px;background:#d4d0c8;border-top-left-radius:2px;border-top-right-radius:2px;box-shadow:inset 1px 1px #fff, inset -1px 0 #404040, inset -2px 0 #808080"></div>
<div style="left:47px;top:42px;width:41px;height:2px;background:#d4d0c8"></div>
<div class="t" style="left:54px;top:26.69px;font-size:11px;line-height:11px;font-weight:normal;color:#000;font-family:'Liberation Sans', sans-serif;">Box</div>
<div style="left:11px;top:51px;width:177px;height:16px;background:#d4d0c8;box-shadow:inset 1px 1px #808080, inset -1px -1px #fff"></div>
<div class="t" style="left:13px;top:53.69px;font-size:11px;line-height:11px;font-weight:normal;color:#000;font-family:'Liberation Sans', sans-serif;">Vented</div>
<div style="left:192px;top:51px;width:71px;height:16px;background:#d4d0c8;box-shadow:inset 1px 1px #fff, inset -1px -1px #404040, inset -2px -2px #808080"></div>
<div class="t" style="left:192px;width:71px;text-align:center;top:53.69px;font-size:11px;line-height:11px">Box shape</div>
<div style="left:11px;top:75px;width:84px;height:95px;box-shadow:inset 1px 1px #808080, inset -1px -1px #fff, inset 2px 2px #fff, inset -2px -2px #808080"></div>
<div class="t" style="left:17px;top:71.69px;font-size:11px;line-height:11px;font-weight:normal;color:#000;font-family:'Liberation Sans', sans-serif;background:#d4d0c8;padding:0 1px">Front chamber:</div>
<div class="t" style="left:19px;top:87.69px;font-size:11px;line-height:11px;font-weight:normal;color:#0000c0;font-family:'Liberation Sans', sans-serif;">Volume:</div>
<div style="left:19px;top:102px;width:53px;height:21px;background:#fff;box-shadow:inset 1px 1px #808080, inset -1px -1px #fff, inset 2px 2px #404040, inset -2px -2px #d4d0c8"></div>
<div style="left:22px;top:105px;width:19px;height:13px;background:#0a246a"></div>
<div class="t" style="left:23px;top:107.69px;font-size:11px;line-height:11px;font-weight:normal;color:#fff;font-family:'Liberation Sans', sans-serif;">210</div>
<div class="t" style="left:78px;top:114.07px;font-size:7px;line-height:7px;font-weight:bold;color:#000;font-family:'Liberation Sans', sans-serif;">l</div>
<div class="t" style="left:20px;top:126.69px;font-size:11px;line-height:11px;font-weight:normal;color:#0000c0;font-family:'Liberation Sans', sans-serif;">Tuning freq.:</div>
<div style="left:19px;top:142px;width:53px;height:21px;background:#fff;box-shadow:inset 1px 1px #808080, inset -1px -1px #fff, inset 2px 2px #404040, inset -2px -2px #d4d0c8"></div>
<div class="t" style="left:23px;top:147.69px;font-size:11px;line-height:11px;font-weight:normal;color:#000;font-family:'Liberation Sans', sans-serif;">38</div>
<div class="t" style="left:77px;top:154.07px;font-size:7px;line-height:7px;font-weight:bold;color:#000;font-family:'Liberation Sans', sans-serif;">Hz</div>
<svg style="left:192px;top:75px" width="72" height="96"><rect x="1" y="1" width="70" height="94" fill="#fff" stroke="#000" stroke-width="2.2"/><rect x="49.5" y="20.5" width="8" height="31" rx="3" fill="#000"/><path d="M57 22 C61 16, 66 14, 70 14 L70 58 C66 58, 61 56, 57 50 Z" fill="#000"/><path d="M61 24 l1.5 -2 M62 36 l1.5 0 M61 48 l1.5 2" stroke="#fff" stroke-width="1.2"/><rect x="33" y="69" width="37" height="2" fill="#000"/><rect x="33" y="84" width="37" height="2" fill="#000"/></svg>
<div class="t" style="left:15px;top:179.69px;font-size:11px;line-height:11px;font-weight:normal;color:#000;font-family:'Liberation Sans', sans-serif;">Ql = 7,00</div>
<div style="left:4px;top:211px;width:64px;height:12px;background:#d4d0c8;box-shadow:inset 1px 1px #fff, inset -1px -1px #808080"></div>
<div class="t" style="left:16px;top:213.13px;font-size:8.8px;line-height:8.8px;font-weight:bold;color:#000;font-family:'Liberation Serif', serif;">Parameters</div>
<div style="left:68px;top:211px;width:237px;height:12px;background:#ffffff"></div>
<div class="t" style="left:15px;top:231.69px;font-size:11px;line-height:11px;font-weight:normal;color:#000;font-family:'Liberation Sans', sans-serif;">Qts:</div>
<div style="left:47px;top:231px;width:49px;height:13px;background:#d4d0c8;box-shadow:inset 1px 1px #808080, inset -1px -1px #fff"></div>
<div class="t" style="left:47px;width:49px;text-align:center;top:231.69px;font-size:11px;line-height:11px">0,48</div>
<div class="t" style="left:155px;top:231.69px;font-size:11px;line-height:11px;font-weight:normal;color:#000;font-family:'Liberation Sans', sans-serif;">Qms:</div>
<div style="left:187px;top:231px;width:49px;height:13px;background:#d4d0c8;box-shadow:inset 1px 1px #808080, inset -1px -1px #fff"></div>
<div class="t" style="left:187px;width:49px;text-align:center;top:231.69px;font-size:11px;line-height:11px">4,75</div>
<div class="t" style="left:15px;top:247.69px;font-size:11px;line-height:11px;font-weight:normal;color:#000;font-family:'Liberation Sans', sans-serif;">Vas:</div>
<div style="left:47px;top:247px;width:49px;height:13px;background:#d4d0c8;box-shadow:inset 1px 1px #808080, inset -1px -1px #fff"></div>
<div class="t" style="left:47px;width:49px;text-align:center;top:247.69px;font-size:11px;line-height:11px">250,0</div>
<div class="t" style="left:99px;top:247.69px;font-size:11px;line-height:11px;font-weight:normal;color:#000;font-family:'Liberation Sans', sans-serif;">l</div>
<div class="t" style="left:155px;top:247.69px;font-size:11px;line-height:11px;font-weight:normal;color:#000;font-family:'Liberation Sans', sans-serif;">Qes:</div>
<div style="left:187px;top:247px;width:49px;height:13px;background:#d4d0c8;box-shadow:inset 1px 1px #808080, inset -1px -1px #fff"></div>
<div class="t" style="left:187px;width:49px;text-align:center;top:247.69px;font-size:11px;line-height:11px">0,54</div>
<div class="t" style="left:15px;top:263.69px;font-size:11px;line-height:11px;font-weight:normal;color:#000;font-family:'Liberation Sans', sans-serif;">Fs:</div>
<div style="left:47px;top:263px;width:49px;height:13px;background:#d4d0c8;box-shadow:inset 1px 1px #808080, inset -1px -1px #fff"></div>
<div class="t" style="left:47px;width:49px;text-align:center;top:263.69px;font-size:11px;line-height:11px">36,00</div>
<div class="t" style="left:99px;top:263.69px;font-size:11px;line-height:11px;font-weight:normal;color:#000;font-family:'Liberation Sans', sans-serif;">Hz</div>
<div class="t" style="left:155px;top:263.69px;font-size:11px;line-height:11px;font-weight:normal;color:#000;font-family:'Liberation Sans', sans-serif;">SPL:</div>
<div style="left:187px;top:263px;width:49px;height:13px;background:#d4d0c8;box-shadow:inset 1px 1px #808080, inset -1px -1px #fff"></div>
<div class="t" style="left:187px;width:49px;text-align:center;top:263.69px;font-size:11px;line-height:11px">98,00</div>
<div class="t" style="left:239px;top:263.69px;font-size:11px;line-height:11px;font-weight:normal;color:#000;font-family:'Liberation Sans', sans-serif;">dB</div>
<div class="t" style="left:15px;top:279.69px;font-size:11px;line-height:11px;font-weight:normal;color:#000;font-family:'Liberation Sans', sans-serif;">Re:</div>
<div style="left:47px;top:279px;width:49px;height:13px;background:#d4d0c8;box-shadow:inset 1px 1px #808080, inset -1px -1px #fff"></div>
<div class="t" style="left:47px;width:49px;text-align:center;top:279.69px;font-size:11px;line-height:11px">6,00</div>
<div class="t" style="left:99px;top:279.69px;font-size:11px;line-height:11px;font-weight:normal;color:#000;font-family:'Liberation Sans', sans-serif;">ohm</div>
<div class="t" style="left:155px;top:279.69px;font-size:11px;line-height:11px;font-weight:normal;color:#000;font-family:'Liberation Sans', sans-serif;">Pe:</div>
<div style="left:187px;top:279px;width:49px;height:13px;background:#d4d0c8;box-shadow:inset 1px 1px #808080, inset -1px -1px #fff"></div>
<div class="t" style="left:187px;width:49px;text-align:center;top:279.69px;font-size:11px;line-height:11px">500,0</div>
<div class="t" style="left:239px;top:279.69px;font-size:11px;line-height:11px;font-weight:normal;color:#000;font-family:'Liberation Sans', sans-serif;">W</div>
<div class="t" style="left:15px;top:295.69px;font-size:11px;line-height:11px;font-weight:normal;color:#000;font-family:'Liberation Sans', sans-serif;">Le:</div>
<div style="left:47px;top:295px;width:49px;height:13px;background:#d4d0c8;box-shadow:inset 1px 1px #808080, inset -1px -1px #fff"></div>
<div class="t" style="left:47px;width:49px;text-align:center;top:295.69px;font-size:11px;line-height:11px">1,65</div>
<div class="t" style="left:155px;top:295.69px;font-size:11px;line-height:11px;font-weight:normal;color:#000;font-family:'Liberation Sans', sans-serif;">BL:</div>
<div style="left:187px;top:295px;width:49px;height:13px;background:#d4d0c8;box-shadow:inset 1px 1px #808080, inset -1px -1px #fff"></div>
<div class="t" style="left:187px;width:49px;text-align:center;top:295.69px;font-size:11px;line-height:11px">17,49</div>
<div class="t" style="left:15px;top:311.69px;font-size:11px;line-height:11px;font-weight:normal;color:#000;font-family:'Liberation Sans', sans-serif;">Xmax:</div>
<div style="left:47px;top:311px;width:49px;height:13px;background:#d4d0c8;box-shadow:inset 1px 1px #808080, inset -1px -1px #fff"></div>
<div class="t" style="left:47px;width:49px;text-align:center;top:311.69px;font-size:11px;line-height:11px">0,006</div>
<div class="t" style="left:99px;top:311.69px;font-size:11px;line-height:11px;font-weight:normal;color:#000;font-family:'Liberation Sans', sans-serif;">m</div>
<div class="t" style="left:155px;top:311.69px;font-size:11px;line-height:11px;font-weight:normal;color:#000;font-family:'Liberation Sans', sans-serif;">dia:</div>
<div style="left:187px;top:311px;width:49px;height:13px;background:#d4d0c8;box-shadow:inset 1px 1px #808080, inset -1px -1px #fff"></div>
<div class="t" style="left:187px;width:49px;text-align:center;top:311.69px;font-size:11px;line-height:11px">0,438</div>
<div class="t" style="left:239px;top:311.69px;font-size:11px;line-height:11px;font-weight:normal;color:#000;font-family:'Liberation Sans', sans-serif;">m</div>
<div class="t" style="left:15px;top:327.69px;font-size:11px;line-height:11px;font-weight:normal;color:#000;font-family:'Liberation Sans', sans-serif;">Z:</div>
<div style="left:47px;top:327px;width:49px;height:13px;background:#d4d0c8;box-shadow:inset 1px 1px #808080, inset -1px -1px #fff"></div>
<div class="t" style="left:47px;width:49px;text-align:center;top:327.69px;font-size:11px;line-height:11px">8,00</div>
<div class="t" style="left:99px;top:327.69px;font-size:11px;line-height:11px;font-weight:normal;color:#000;font-family:'Liberation Sans', sans-serif;">ohm</div>
<div class="t" style="left:155px;top:327.69px;font-size:11px;line-height:11px;font-weight:normal;color:#000;font-family:'Liberation Sans', sans-serif;">Sd:</div>
<div style="left:187px;top:327px;width:49px;height:13px;background:#d4d0c8;box-shadow:inset 1px 1px #808080, inset -1px -1px #fff"></div>
<div class="t" style="left:187px;width:49px;text-align:center;top:327.69px;font-size:11px;line-height:11px">0,116</div>
<div class="t" style="left:239px;top:327.69px;font-size:11px;line-height:11px;font-weight:normal;color:#000;font-family:'Liberation Sans', sans-serif;">m^2</div>
</div>
<div style="left:0px;top:738px;width:1024px;height:30px;background:#d4d0c8"></div>
<div style="left:0px;top:738px;width:1024px;height:1px;background:#d4d0c8"></div>
<div style="left:0px;top:739px;width:1024px;height:1px;background:#fff"></div>
<div style="left:2px;top:742px;width:52px;height:22px;background:#d4d0c8;box-shadow:inset 1px 1px #fff, inset -1px -1px #404040, inset -2px -2px #808080"></div>
<svg style="left:4px;top:745px" width="16" height="15"><path d="M1 3 Q4 1 7 2.5 L6.5 7 Q4 6 1 7.5 Z" fill="#e8622a"/><path d="M8 2.8 Q11 4 14.5 2 L14 7 Q11 8.5 7.6 7.2 Z" fill="#6cba3a"/><path d="M0.8 8.5 Q4 7 6.4 8 L6 13 Q3 12 0.5 13.5 Z" fill="#3a7ad8"/><path d="M7.5 8.2 Q11 9.5 14 8 L13.5 12.8 Q10.5 14.5 7.2 13 Z" fill="#f2c22a"/></svg>
<div class="t" style="left:22px;top:747.69px;font-size:11px;line-height:11px;font-weight:bold;color:#000;font-family:'Liberation Sans', sans-serif;letter-spacing:0.5px">Start</div>
<div style="left:60px;top:744px;width:1px;height:19px;background:#fff"></div>
<div style="left:61px;top:744px;width:1px;height:19px;background:#808080"></div>
<svg style="left:70px;top:745px" width="17" height="17"><path d="M2 3 Q2 1 4 1 L13 1.5 Q15 2 15 4 L14.5 13 Q14 15 12 15 L4 15.5 Q1.5 15.5 1.5 13 Z" fill="#eef6fc" stroke="#2a70b8" stroke-width="1.8"/><path d="M4.5 4.5 H10 V7 H7 V9 H11 V12 H4.5 Z" fill="#b8d8f0" stroke="#3a80c0" stroke-width="0.8"/><path d="M6 9 l3 -2 v1.2 h3 v1.6 h-3 v1.2z" fill="#000"/><path d="M15 6 l2 1 -2 1z" fill="#d04040"/></svg>
<svg style="left:94px;top:746px" width="16" height="16"><rect x="0" y="0" width="16" height="16" fill="#b8141c"/><path d="M3.2 13.5 L5 3.5 H10 M4.2 8.2 H8" fill="none" stroke="#fff" stroke-width="2"/><path d="M8.5 8 H13.5 L8.5 13 H13" fill="none" stroke="#fff" stroke-width="1.8"/></svg>
<svg style="left:117px;top:745px" width="17" height="17"><circle cx="8.5" cy="8.8" r="7.6" fill="#e87a1a"/><circle cx="10.5" cy="6.5" r="4.2" fill="#3a7ac8"/><circle cx="9.8" cy="5.5" r="1.2" fill="#102040"/><path d="M1.5 8 Q3 3 7 2 Q5 5 7 8 Q9 11 13 10 Q15 9 15.8 7 Q16 14 9 16 Q2 16 1.5 8Z" fill="#e06a10"/><path d="M12 14 Q15 12 16 8.5" fill="none" stroke="#f0c030" stroke-width="1"/></svg>
<div style="left:171px;top:744px;width:1px;height:19px;background:#fff"></div>
<div style="left:172px;top:744px;width:1px;height:19px;background:#808080"></div>
<div style="left:177px;top:742px;width:160px;height:22px;background-color:#eae8e4;background-image:repeating-conic-gradient(#fff 0 25%, #d4d0c8 0 50%);background-size:2px 2px;box-shadow:inset 1px 1px #404040, inset -1px -1px #fff, inset 2px 2px #808080"></div>
<svg style="left:179px;top:745px" width="20" height="20"><path d="M15.6 5.0 C13.2 5.2 13.0 7.6 14.8 8.8 C16.2 9.8 15.6 11.4 13.8 11.6 L10.2 11.9 C8.4 12.3 7.0 14 5.6 16.4" fill="none" stroke="#000" stroke-width="2.8" stroke-linecap="round" stroke-linejoin="round"/></svg>
<div class="t" style="left:202px;top:747.69px;font-size:11px;line-height:11px;font-weight:bold;color:#000;font-family:'Liberation Sans', sans-serif;letter-spacing:0.7px">WinISD beta</div>
<div style="left:339px;top:742px;width:161px;height:22px;background:#d4d0c8;box-shadow:inset 1px 1px #fff, inset -1px -1px #404040, inset -2px -2px #808080"></div>
<svg style="left:344px;top:746px" width="17" height="15"><path d="M1 3 h5 l1.5 1.5 h7.5 v9 h-14 z" fill="#e8d070" stroke="#a88a30"/><path d="M1 6 h14 v7.5 h-14z" fill="#f8e890" stroke="#a88a30"/></svg>
<div class="t" style="left:363px;top:747.69px;font-size:11px;line-height:11px;font-weight:normal;color:#000;font-family:'Liberation Sans', sans-serif;letter-spacing:0">C:\Dokumente und Einst...</div>
<div style="left:789px;top:744px;width:1px;height:19px;background:#fff"></div>
<div style="left:790px;top:744px;width:1px;height:19px;background:#808080"></div>
<div style="left:816px;top:742px;width:207px;height:23px;box-shadow:inset 1px 1px #808080, inset -1px -1px #fff"></div>
<svg style="left:818px;top:745px" width="17" height="17"><path d="M6 3 L11 1 L16 10 L9 16 L6 14 Z" fill="#c8c8c8" stroke="#808080"/><path d="M8 11 l2 2 M10 9 l2 2" stroke="#404040"/><circle cx="5" cy="5" r="4.2" fill="#c81818" stroke="#801010" stroke-width="0.8"/><path d="M3.2 3.2 l3.6 3.6 M6.8 3.2 l-3.6 3.6" stroke="#fff" stroke-width="1.3"/></svg>
<svg style="left:837px;top:745px" width="17" height="17"><path d="M1 4 L5 1.5 L8.5 3.5 L12 1.5 L16 4 L12.5 6.5 L16 9 L12 11.5 L8.5 9.5 L5 11.5 L1 9 L4.5 6.5 Z" fill="#8ec0ec" stroke="#4a88c8" stroke-width="0.8"/><circle cx="11.5" cy="12" r="4" fill="#2a9a3a" stroke="#1a6a2a" stroke-width="0.6"/><path d="M9.5 12 l1.5 1.6 2.6-3" stroke="#fff" fill="none" stroke-width="1.2"/></svg>
<svg style="left:855px;top:745px" width="17" height="17"><path d="M1.5 6 Q8 -1 14.5 6" fill="none" stroke="#000" stroke-width="2.6"/><path d="M1.5 6 Q8 -1 14.5 6" fill="none" stroke="#fff" stroke-width="1.2"/><path d="M4 8.5 Q8 4 12 8.5" fill="none" stroke="#000" stroke-width="2.6"/><path d="M4 8.5 Q8 4 12 8.5" fill="none" stroke="#fff" stroke-width="1.2"/><path d="M5 16 V12 Q8 9 11 12 V16 Z" fill="#20c030" stroke="#000" stroke-width="1"/></svg>
<svg style="left:873px;top:745px" width="17" height="17"><rect x="0.5" y="0.5" width="15" height="15" rx="2" fill="#d81c20"/><path d="M2.5 12 Q4 3 9 3 Q13 3 11 8 Q10 11 14 13" fill="none" stroke="#f8e0e0" stroke-width="1.6"/></svg>
<svg style="left:891px;top:745px" width="17" height="17"><rect x="0.5" y="0.5" width="15" height="15" rx="1" fill="#c01838"/><ellipse cx="8" cy="8" rx="5" ry="6" fill="none" stroke="#f8d8e0" stroke-width="1.3"/><path d="M11 3 Q5 6 5 13" fill="none" stroke="#f8d8e0" stroke-width="1.3"/></svg>
<svg style="left:909px;top:745px" width="17" height="17"><rect x="1" y="5" width="6" height="9" fill="#3a5aa8"/><rect x="6" y="1" width="6" height="8" fill="#4a4a98"/><path d="M8 9 l6 6 M14 9 l-6 6" stroke="#e02828" stroke-width="2"/></svg>
<svg style="left:927px;top:745px" width="17" height="17"><circle cx="6" cy="7" r="5" fill="#707070" stroke="#303030"/><circle cx="5" cy="6" r="2" fill="#b0b0b0"/><circle cx="11.5" cy="11.5" r="4" fill="#e05030" stroke="#a03018" stroke-width="0.6"/><path d="M9 11.5 h5" stroke="#fff" stroke-width="1.5"/></svg>
<svg style="left:949px;top:745px" width="17" height="17"><rect x="1.5" y="2" width="9" height="14" rx="1.5" fill="#1830c0" stroke="#101040"/><rect x="2.5" y="3" width="7" height="6" fill="#f0f0f0"/><path d="M4.5 5.5 h3 M6 4 v3" stroke="#d02020" stroke-width="1.2"/></svg>
<svg style="left:963px;top:745px" width="17" height="17"><path d="M1 2 L11 0.5 L16 13 L5 15.5 Z" fill="#1818c8" stroke="#000880" stroke-width="1"/><path d="M3 3 L1.5 13" stroke="#a0a8f0" stroke-width="1"/></svg>
<div class="t" style="left:986px;top:747.69px;font-size:11px;line-height:11px;font-weight:normal;color:#000;font-family:'Liberation Sans', sans-serif;letter-spacing:0">18:21</div>
</body></html>
